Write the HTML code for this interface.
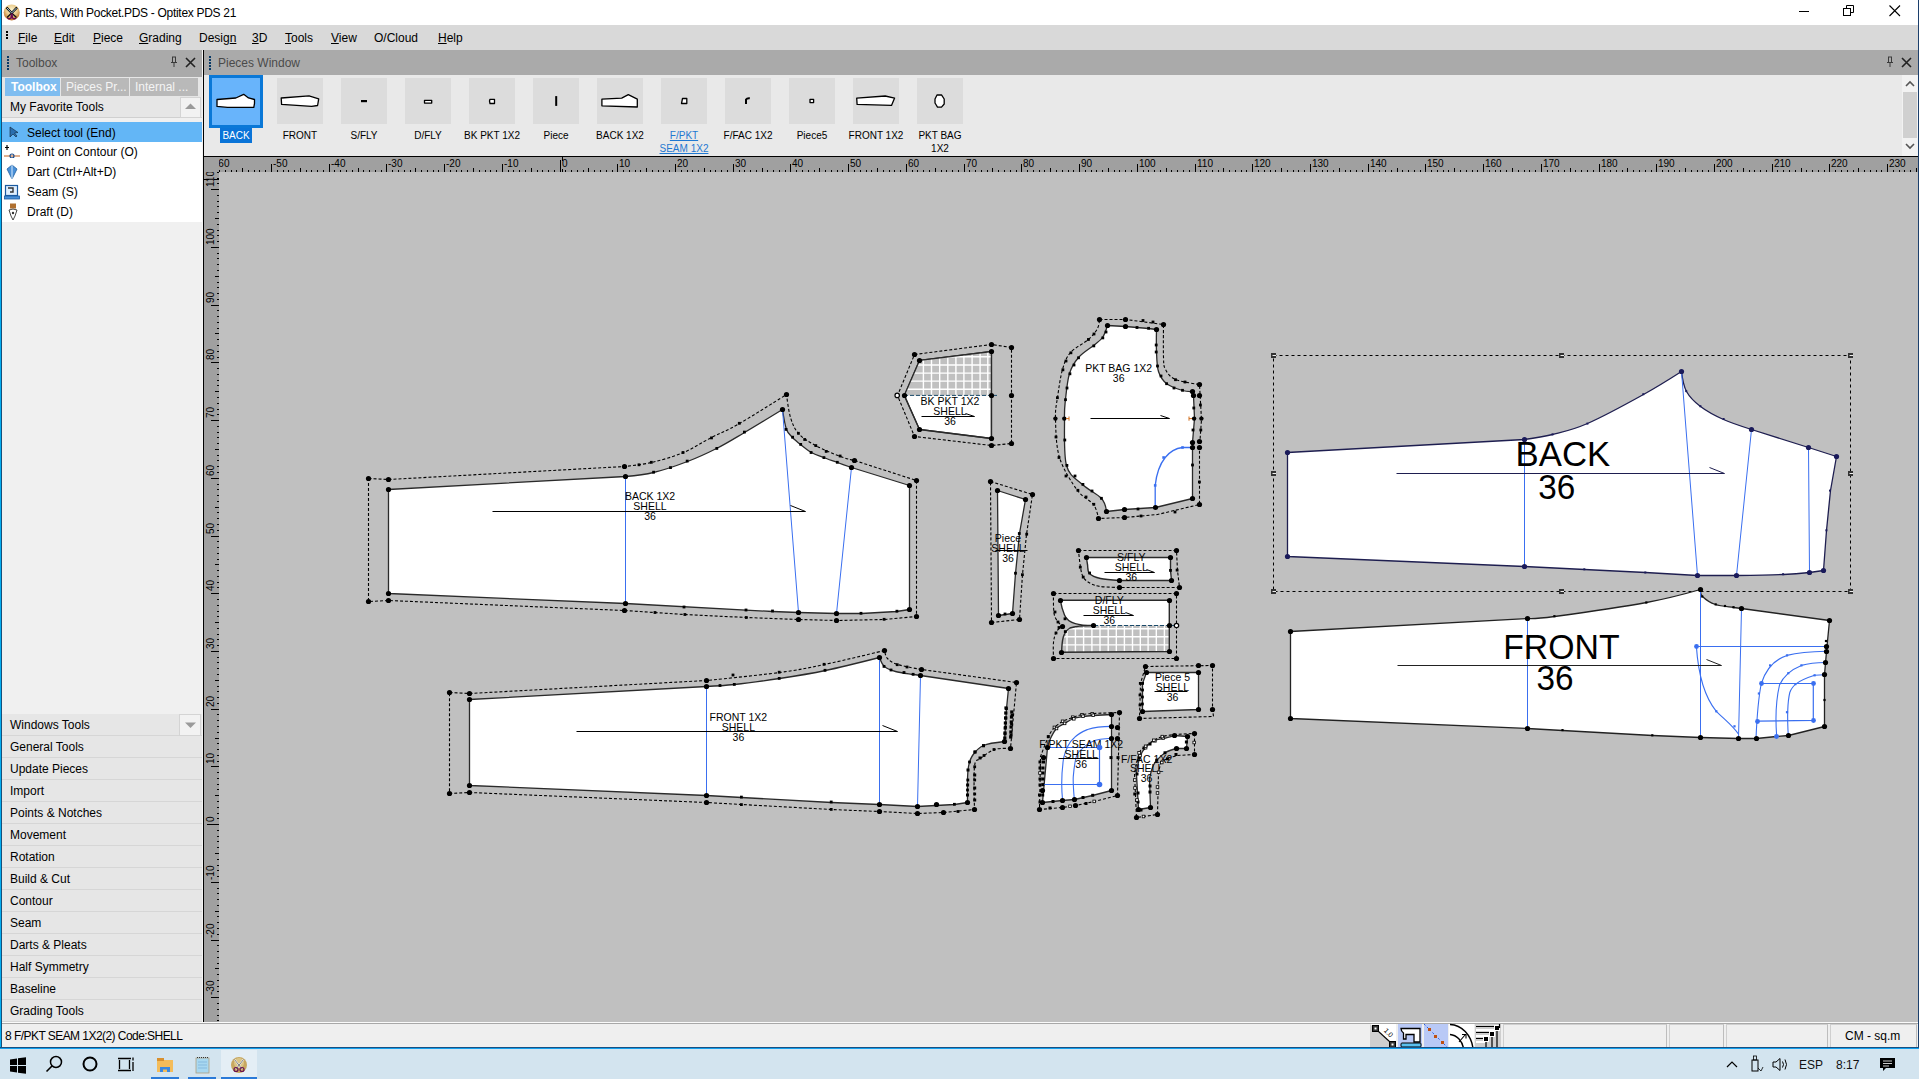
<!DOCTYPE html><html><head><meta charset="utf-8"><title>Optitex PDS</title><style>
*{box-sizing:border-box;margin:0;padding:0}
html,body{width:1919px;height:1079px;overflow:hidden;background:#c0c0c0;font-family:"Liberation Sans",sans-serif;font-size:12px;color:#000}
.a{position:absolute}
.t{position:absolute;white-space:nowrap;line-height:1}
u{text-decoration:underline;text-underline-offset:1px}
</style></head><body>
<div class="a" style="left:0;top:0;width:1919px;height:25px;background:#fff"></div>
<div class="t" style="left:25px;top:7px;font-size:12px;color:#000;letter-spacing:-0.3px">Pants, With Pocket.PDS - Optitex PDS 21</div>
<svg class="a" style="left:3px;top:4px" width="18" height="18" viewBox="0 0 18 18"><defs><radialGradient id="gic" cx="0.5" cy="0.35" r="0.6"><stop offset="0" stop-color="#fbf4d0"/><stop offset="0.6" stop-color="#e8c888"/><stop offset="1" stop-color="#c07830"/></radialGradient></defs><circle cx="8.7" cy="8.4" r="8" fill="url(#gic)"/><path d="M3.5 3.5 L8.7 9 L14 3.5" fill="none" stroke="#000" stroke-width="2.2"/><path d="M4 4 L8.7 9 L13.5 4" fill="none" stroke="#bfe8ff" stroke-width="0.9"/><path d="M8.7 9 L4 13.5 M8.7 9 L13.5 13.5" stroke="#111" stroke-width="1.3"/><path d="M8.5 9.5 L8 14 Q6 15.5 4.5 14 M9 9.5 L9.5 14 Q11.5 15.5 13 14" fill="none" stroke="#6a0a50" stroke-width="1.4"/></svg>
<div class="a" style="left:1799px;top:11px;width:10px;height:1px;background:#000"></div>
<svg class="a" style="left:1843px;top:5px" width="12" height="12" viewBox="0 0 12 12"><rect x="0.5" y="3.5" width="7" height="7" fill="none" stroke="#000"/><path d="M3.5 3.5 V0.5 H10.5 V7.5 H7.5" fill="none" stroke="#000"/></svg>
<svg class="a" style="left:1889px;top:5px" width="12" height="12" viewBox="0 0 12 12"><path d="M0.5 0.5 L11 11 M11 0.5 L0.5 11" stroke="#000" stroke-width="1.1"/></svg>
<div class="a" style="left:0;top:25px;width:1919px;height:25px;background:#d9d9d9"></div>
<div class="a" style="left:6px;top:31px;width:2px;height:2px;background:#000;box-shadow:0 3px 0 #000,0 6px 0 #000"></div>
<div class="t" style="left:18px;top:32px"><u>F</u>ile</div>
<div class="t" style="left:54px;top:32px"><u>E</u>dit</div>
<div class="t" style="left:93px;top:32px"><u>P</u>iece</div>
<div class="t" style="left:139px;top:32px"><u>G</u>rading</div>
<div class="t" style="left:199px;top:32px">Desig<u>n</u></div>
<div class="t" style="left:252px;top:32px"><u>3</u>D</div>
<div class="t" style="left:285px;top:32px"><u>T</u>ools</div>
<div class="t" style="left:331px;top:32px"><u>V</u>iew</div>
<div class="t" style="left:374px;top:32px">O/Cloud</div>
<div class="t" style="left:438px;top:32px"><u>H</u>elp</div>
<div class="a" style="left:0;top:0;width:1px;height:1049px;background:#05aef2"></div>
<div class="a" style="left:1px;top:0;width:1px;height:1049px;background:#16507a"></div>
<div class="a" style="left:1918px;top:0;width:1px;height:1049px;background:#1c3f6c"></div>
<div class="a" style="left:2px;top:50px;width:201px;height:972px;background:#f0f0f0"></div>
<div class="a" style="left:2px;top:50px;width:201px;height:28px;background:#aaaaaa"></div>
<div class="a" style="left:7px;top:56px;width:2px;height:2px;background:#0a3a66;box-shadow:0 3px 0 #0a3a66,0 6px 0 #0a3a66,0 9px 0 #0a3a66,0 12px 0 #0a3a66"></div>
<div class="t" style="left:16px;top:57px;color:#4a4a4a">Toolbox</div>
<svg class="a" style="left:169px;top:56px" width="10" height="12" viewBox="0 0 10 12"><path d="M3 1 H7 M3.5 1 V6 M6.5 1 V6 M2 6.5 H8 M5 7 V11" stroke="#3a3a3a" stroke-width="1"/></svg>
<svg class="a" style="left:185px;top:57px" width="11" height="11" viewBox="0 0 11 11"><path d="M1 1 L10 10 M10 1 L1 10" stroke="#222" stroke-width="1.6"/></svg>
<div class="a" style="left:2px;top:77px;width:201px;height:19px;background:#e6e6e6"></div>
<div class="a" style="left:5px;top:78px;width:55px;height:18px;background:#7fbdf0"></div>
<div class="t" style="left:11px;top:81px;color:#fff;font-weight:bold">Toolbox</div>
<div class="a" style="left:61px;top:78px;width:68px;height:18px;background:#b9b9b9"></div>
<div class="t" style="left:66px;top:81px;color:#f4f4f4">Pieces Pr...</div>
<div class="a" style="left:130px;top:78px;width:68px;height:18px;background:#b9b9b9"></div>
<div class="t" style="left:135px;top:81px;color:#f4f4f4">Internal ...</div>
<div class="a" style="left:2px;top:96px;width:200px;height:22px;background:#e6e6e6;border-bottom:1px solid #d0d0d0"></div>
<div class="t" style="left:10px;top:101px">My Favorite Tools</div>
<div class="a" style="left:180px;top:97px;width:21px;height:21px;background:#f2f2f2;border:1px solid #d4d4d4"></div>
<svg class="a" style="left:185px;top:103px" width="11" height="7"><path d="M0 6 L5.5 0.5 L11 6 Z" fill="#9a9a9a"/></svg>
<div class="a" style="left:2px;top:122px;width:200px;height:100px;background:#fff"></div>
<div class="a" style="left:2px;top:122px;width:200px;height:20px;background:#63b6f6"></div>
<div class="t" style="left:27px;top:127px">Select tool (End)</div>
<div class="t" style="left:27px;top:146px">Point on Contour (O)</div>
<div class="t" style="left:27px;top:166px">Dart (Ctrl+Alt+D)</div>
<div class="t" style="left:27px;top:186px">Seam (S)</div>
<div class="t" style="left:27px;top:206px">Draft (D)</div>
<svg class="a" style="left:8px;top:126px" width="12" height="12" viewBox="0 0 12 12"><path d="M2 1 V11 L5 8 L8 11 L9 10 L6.5 7 L10 6.5 Z" fill="#2a6fb0" stroke="#123" stroke-width="0.6"/></svg>
<svg class="a" style="left:4px;top:144px" width="18" height="14" viewBox="0 0 18 14"><path d="M3 1 V6 M1 3.5 H5" stroke="#000" stroke-width="1.2"/><path d="M0 12 H16" stroke="#c06020" stroke-width="1"/><circle cx="8" cy="12" r="2" fill="none" stroke="#1a4a8a" stroke-width="1.2"/></svg>
<svg class="a" style="left:6px;top:164px" width="12" height="16" viewBox="0 0 12 16"><path d="M6 1 L11 5 L6 15 L1 5 Z" fill="#4a90d8" stroke="#2060a0" stroke-width="0.8"/><path d="M6 1 V15" stroke="#d8ecff" stroke-width="1"/></svg>
<svg class="a" style="left:4px;top:184px" width="16" height="16" viewBox="0 0 16 16"><rect x="1.5" y="1.5" width="12" height="10" fill="#dfefff" stroke="#1a5aa0" stroke-width="1.2"/><rect x="0.5" y="12" width="15" height="3" fill="#4a90d8" stroke="#1a5aa0" stroke-width="0.8"/><path d="M4 4 H9 V8 H6" fill="none" stroke="#333" stroke-width="1.4"/></svg>
<svg class="a" style="left:7px;top:203px" width="12" height="18" viewBox="0 0 12 18"><rect x="3" y="0.5" width="6" height="5" fill="#b07030"/><path d="M2 7 L6 6 L10 7 L8 13 L6 17 L4 13 Z" fill="#fff" stroke="#333" stroke-width="0.9"/><circle cx="6" cy="10" r="1.2" fill="#333"/></svg>
<div class="a" style="left:2px;top:714px;width:200px;height:308px;background:#e6e6e6"></div>
<div class="a" style="left:2px;top:735px;width:200px;height:1px;background:#d6d6d6"></div>
<div class="t" style="left:10px;top:719px">Windows Tools</div>
<div class="a" style="left:2px;top:757px;width:200px;height:1px;background:#d6d6d6"></div>
<div class="t" style="left:10px;top:741px">General Tools</div>
<div class="a" style="left:2px;top:779px;width:200px;height:1px;background:#d6d6d6"></div>
<div class="t" style="left:10px;top:763px">Update Pieces</div>
<div class="a" style="left:2px;top:801px;width:200px;height:1px;background:#d6d6d6"></div>
<div class="t" style="left:10px;top:785px">Import</div>
<div class="a" style="left:2px;top:823px;width:200px;height:1px;background:#d6d6d6"></div>
<div class="t" style="left:10px;top:807px">Points &amp; Notches</div>
<div class="a" style="left:2px;top:845px;width:200px;height:1px;background:#d6d6d6"></div>
<div class="t" style="left:10px;top:829px">Movement</div>
<div class="a" style="left:2px;top:867px;width:200px;height:1px;background:#d6d6d6"></div>
<div class="t" style="left:10px;top:851px">Rotation</div>
<div class="a" style="left:2px;top:889px;width:200px;height:1px;background:#d6d6d6"></div>
<div class="t" style="left:10px;top:873px">Build &amp; Cut</div>
<div class="a" style="left:2px;top:911px;width:200px;height:1px;background:#d6d6d6"></div>
<div class="t" style="left:10px;top:895px">Contour</div>
<div class="a" style="left:2px;top:933px;width:200px;height:1px;background:#d6d6d6"></div>
<div class="t" style="left:10px;top:917px">Seam</div>
<div class="a" style="left:2px;top:955px;width:200px;height:1px;background:#d6d6d6"></div>
<div class="t" style="left:10px;top:939px">Darts &amp; Pleats</div>
<div class="a" style="left:2px;top:977px;width:200px;height:1px;background:#d6d6d6"></div>
<div class="t" style="left:10px;top:961px">Half Symmetry</div>
<div class="a" style="left:2px;top:999px;width:200px;height:1px;background:#d6d6d6"></div>
<div class="t" style="left:10px;top:983px">Baseline</div>
<div class="a" style="left:2px;top:1021px;width:200px;height:1px;background:#d6d6d6"></div>
<div class="t" style="left:10px;top:1005px">Grading Tools</div>
<div class="a" style="left:179px;top:714px;width:22px;height:22px;background:#f2f2f2;border:1px solid #d4d4d4"></div>
<svg class="a" style="left:185px;top:722px" width="11" height="7"><path d="M0 0.5 L5.5 6 L11 0.5 Z" fill="#9a9a9a"/></svg>
<div class="a" style="left:202px;top:50px;width:1px;height:972px;background:#f4f4f4"></div>
<div class="a" style="left:203px;top:50px;width:1px;height:972px;background:#000"></div>
<div class="a" style="left:204px;top:50px;width:1714px;height:25px;background:#aaaaaa"></div>
<div class="a" style="left:209px;top:56px;width:2px;height:2px;background:#0a3a66;box-shadow:0 3px 0 #0a3a66,0 6px 0 #0a3a66,0 9px 0 #0a3a66,0 12px 0 #0a3a66"></div>
<div class="t" style="left:218px;top:57px;color:#4a4a4a">Pieces Window</div>
<svg class="a" style="left:1885px;top:56px" width="10" height="12" viewBox="0 0 10 12"><path d="M3 1 H7 M3.5 1 V6 M6.5 1 V6 M2 6.5 H8 M5 7 V11" stroke="#3a3a3a" stroke-width="1"/></svg>
<svg class="a" style="left:1901px;top:57px" width="11" height="11" viewBox="0 0 11 11"><path d="M1 1 L10 10 M10 1 L1 10" stroke="#222" stroke-width="1.6"/></svg>
<div class="a" style="left:204px;top:75px;width:1714px;height:81px;background:#e9e9e9"></div>
<div class="a" style="left:1902px;top:75px;width:16px;height:81px;background:#f2f2f2"></div>
<div class="a" style="left:1903px;top:92px;width:14px;height:46px;background:#d0d0d0"></div>
<svg class="a" style="left:1905px;top:80px" width="10" height="7"><path d="M1 6 L5 2 L9 6" fill="none" stroke="#555" stroke-width="1.6"/></svg>
<svg class="a" style="left:1905px;top:143px" width="10" height="7"><path d="M1 1 L5 5 L9 1" fill="none" stroke="#555" stroke-width="1.6"/></svg>
<div class="a" style="left:204px;top:156px;width:1714px;height:1px;background:#000"></div>
<div class="a" style="left:209px;top:75px;width:54px;height:53px;background:#68b4fb;border:3px solid #0a78d7"></div>
<div class="a" style="left:220px;top:128px;width:32px;height:15px;background:#0a74d8"></div>
<div class="t" style="left:196px;width:80px;text-align:center;top:131px;font-size:10px;color:#fff">BACK</div>
<div class="a" style="left:277px;top:78px;width:46px;height:46px;background:#dcdcdc"></div>
<div class="t" style="left:255px;width:90px;text-align:center;top:131px;font-size:10px;color:#000;">FRONT</div>
<div class="a" style="left:341px;top:78px;width:46px;height:46px;background:#dcdcdc"></div>
<div class="t" style="left:319px;width:90px;text-align:center;top:131px;font-size:10px;color:#000;">S/FLY</div>
<div class="a" style="left:405px;top:78px;width:46px;height:46px;background:#dcdcdc"></div>
<div class="t" style="left:383px;width:90px;text-align:center;top:131px;font-size:10px;color:#000;">D/FLY</div>
<div class="a" style="left:469px;top:78px;width:46px;height:46px;background:#dcdcdc"></div>
<div class="t" style="left:447px;width:90px;text-align:center;top:131px;font-size:10px;color:#000;">BK PKT 1X2</div>
<div class="a" style="left:533px;top:78px;width:46px;height:46px;background:#dcdcdc"></div>
<div class="t" style="left:511px;width:90px;text-align:center;top:131px;font-size:10px;color:#000;">Piece</div>
<div class="a" style="left:597px;top:78px;width:46px;height:46px;background:#dcdcdc"></div>
<div class="t" style="left:575px;width:90px;text-align:center;top:131px;font-size:10px;color:#000;">BACK 1X2</div>
<div class="a" style="left:661px;top:78px;width:46px;height:46px;background:#dcdcdc"></div>
<div class="t" style="left:639px;width:90px;text-align:center;top:131px;font-size:10px;color:#1f78d1;text-decoration:underline;">F/PKT</div>
<div class="t" style="left:639px;width:90px;text-align:center;top:144px;font-size:10px;color:#1f78d1;text-decoration:underline;">SEAM 1X2</div>
<div class="a" style="left:725px;top:78px;width:46px;height:46px;background:#dcdcdc"></div>
<div class="t" style="left:703px;width:90px;text-align:center;top:131px;font-size:10px;color:#000;">F/FAC 1X2</div>
<div class="a" style="left:789px;top:78px;width:46px;height:46px;background:#dcdcdc"></div>
<div class="t" style="left:767px;width:90px;text-align:center;top:131px;font-size:10px;color:#000;">Piece5</div>
<div class="a" style="left:853px;top:78px;width:46px;height:46px;background:#dcdcdc"></div>
<div class="t" style="left:831px;width:90px;text-align:center;top:131px;font-size:10px;color:#000;">FRONT 1X2</div>
<div class="a" style="left:917px;top:78px;width:46px;height:46px;background:#dcdcdc"></div>
<div class="t" style="left:895px;width:90px;text-align:center;top:131px;font-size:10px;color:#000;">PKT BAG</div>
<div class="t" style="left:895px;width:90px;text-align:center;top:144px;font-size:10px;color:#000;">1X2</div>
<svg class="a" style="left:0;top:0" width="1000" height="150" viewBox="0 0 1000 150">
<path d="M217 99.5 L235.8 98 L243.7 94.3 L248.5 97.9 L254.5 99.5 L254.5 103.3 L253.8 107.4 L227.5 107.4 L217 106.4 Z" fill="#fff" stroke="#000" stroke-width="1.3" stroke-linejoin="round"/>
<path d="M281.2 98 L309 95.8 L318.7 98.8 L317.6 105.5 L311.6 106.3 L281.6 104.4 Z" fill="#fff" stroke="#000" stroke-width="1.3" stroke-linejoin="round"/>
<rect x="361" y="100" width="6" height="2.2" fill="#000"/>
<rect x="424.5" y="100.3" width="7.2" height="2.8" fill="#fff" stroke="#000" stroke-width="1.3" stroke-linejoin="round"/>
<path d="M490 99.3 L494.5 99.3 L494.5 103.5 L490 103.5 L489.5 101 Z" fill="#fff" stroke="#000" stroke-width="1.3" stroke-linejoin="round"/>
<rect x="555.2" y="96.1" width="2" height="9.8" fill="#000"/>
<path d="M601.9 99.2 L621.7 98.1 L628.3 94.6 L637.3 99.2 L637.3 107 L601.9 105.8 Z" fill="#fff" stroke="#000" stroke-width="1.3" stroke-linejoin="round"/>
<path d="M681.5 103.5 L682.5 98.5 L686.8 98.5 L686.8 103.5 Z" fill="#fff" stroke="#000" stroke-width="1.3" stroke-linejoin="round"/>
<path d="M746 104 V99.5 Q747 98 749.8 98.3" fill="none" stroke="#000" stroke-width="2"/>
<rect x="810" y="99.3" width="3.6" height="3.3" fill="#fff" stroke="#000" stroke-width="1.3" stroke-linejoin="round"/>
<path d="M856.7 98.1 L885.2 96 L894.6 98.1 L891.5 105.4 L857.1 104.4 Z" fill="#fff" stroke="#000" stroke-width="1.3" stroke-linejoin="round"/>
<path d="M937 95 L941.5 94.8 L944.2 99 L944.2 104 L941.5 107.2 L937.5 107.2 L935 103 L935 99 Z" fill="#fff" stroke="#000" stroke-width="1.3" stroke-linejoin="round"/>
</svg>
<svg class="a" style="left:0;top:0" width="1919" height="1079" viewBox="0 0 1919 1079">
<rect x="204" y="157" width="1714" height="15" fill="#a0a0a0"/>
<rect x="204" y="172" width="15" height="850" fill="#a0a0a0"/>
<rect x="219" y="172" width="1699" height="850" fill="#c0c0c0"/>
<g clip-path="url(#ctop)">
<clipPath id="ctop"><rect x="219" y="157" width="1699" height="15"/></clipPath>
<path d="M219.5 170V172M225.5 170V172M231.5 170V172M236.5 170V172M242.5 168V172M248.5 170V172M254.5 170V172M259.5 170V172M265.5 170V172M271.5 164V172M277.5 170V172M283.5 170V172M288.5 170V172M294.5 170V172M300.5 168V172M306.5 170V172M311.5 170V172M317.5 170V172M323.5 170V172M329.5 164V172M334.5 170V172M340.5 170V172M346.5 170V172M352.5 170V172M358.5 168V172M363.5 170V172M369.5 170V172M375.5 170V172M381.5 170V172M386.5 164V172M392.5 170V172M398.5 170V172M404.5 170V172M410.5 170V172M415.5 168V172M421.5 170V172M427.5 170V172M433.5 170V172M438.5 170V172M444.5 164V172M450.5 170V172M456.5 170V172M461.5 170V172M467.5 170V172M473.5 168V172M479.5 170V172M485.5 170V172M490.5 170V172M496.5 170V172M502.5 164V172M508.5 170V172M513.5 170V172M519.5 170V172M525.5 170V172M531.5 168V172M537.5 170V172M542.5 170V172M548.5 170V172M554.5 170V172M560.5 160V172M565.5 170V172M571.5 170V172M577.5 170V172M583.5 170V172M588.5 168V172M594.5 170V172M600.5 170V172M606.5 170V172M612.5 170V172M617.5 164V172M623.5 170V172M629.5 170V172M635.5 170V172M640.5 170V172M646.5 168V172M652.5 170V172M658.5 170V172M663.5 170V172M669.5 170V172M675.5 164V172M681.5 170V172M687.5 170V172M692.5 170V172M698.5 170V172M704.5 168V172M710.5 170V172M715.5 170V172M721.5 170V172M727.5 170V172M733.5 164V172M739.5 170V172M744.5 170V172M750.5 170V172M756.5 170V172M762.5 168V172M767.5 170V172M773.5 170V172M779.5 170V172M785.5 170V172M790.5 164V172M796.5 170V172M802.5 170V172M808.5 170V172M814.5 170V172M819.5 168V172M825.5 170V172M831.5 170V172M837.5 170V172M842.5 170V172M848.5 164V172M854.5 170V172M860.5 170V172M866.5 170V172M871.5 170V172M877.5 168V172M883.5 170V172M889.5 170V172M894.5 170V172M900.5 170V172M906.5 164V172M912.5 170V172M917.5 170V172M923.5 170V172M929.5 170V172M935.5 168V172M941.5 170V172M946.5 170V172M952.5 170V172M958.5 170V172M964.5 164V172M969.5 170V172M975.5 170V172M981.5 170V172M987.5 170V172M992.5 168V172M998.5 170V172M1004.5 170V172M1010.5 170V172M1016.5 170V172M1021.5 164V172M1027.5 170V172M1033.5 170V172M1039.5 170V172M1044.5 170V172M1050.5 168V172M1056.5 170V172M1062.5 170V172M1068.5 170V172M1073.5 170V172M1079.5 164V172M1085.5 170V172M1091.5 170V172M1096.5 170V172M1102.5 170V172M1108.5 168V172M1114.5 170V172M1119.5 170V172M1125.5 170V172M1131.5 170V172M1137.5 164V172M1143.5 170V172M1148.5 170V172M1154.5 170V172M1160.5 170V172M1166.5 168V172M1171.5 170V172M1177.5 170V172M1183.5 170V172M1189.5 170V172M1195.5 164V172M1200.5 170V172M1206.5 170V172M1212.5 170V172M1218.5 170V172M1223.5 168V172M1229.5 170V172M1235.5 170V172M1241.5 170V172M1246.5 170V172M1252.5 164V172M1258.5 170V172M1264.5 170V172M1270.5 170V172M1275.5 170V172M1281.5 168V172M1287.5 170V172M1293.5 170V172M1298.5 170V172M1304.5 170V172M1310.5 164V172M1316.5 170V172M1322.5 170V172M1327.5 170V172M1333.5 170V172M1339.5 168V172M1345.5 170V172M1350.5 170V172M1356.5 170V172M1362.5 170V172M1368.5 164V172M1373.5 170V172M1379.5 170V172M1385.5 170V172M1391.5 170V172M1397.5 168V172M1402.5 170V172M1408.5 170V172M1414.5 170V172M1420.5 170V172M1425.5 164V172M1431.5 170V172M1437.5 170V172M1443.5 170V172M1448.5 170V172M1454.5 168V172M1460.5 170V172M1466.5 170V172M1472.5 170V172M1477.5 170V172M1483.5 164V172M1489.5 170V172M1495.5 170V172M1500.5 170V172M1506.5 170V172M1512.5 168V172M1518.5 170V172M1524.5 170V172M1529.5 170V172M1535.5 170V172M1541.5 164V172M1547.5 170V172M1552.5 170V172M1558.5 170V172M1564.5 170V172M1570.5 168V172M1575.5 170V172M1581.5 170V172M1587.5 170V172M1593.5 170V172M1599.5 164V172M1604.5 170V172M1610.5 170V172M1616.5 170V172M1622.5 170V172M1627.5 168V172M1633.5 170V172M1639.5 170V172M1645.5 170V172M1651.5 170V172M1656.5 164V172M1662.5 170V172M1668.5 170V172M1674.5 170V172M1679.5 170V172M1685.5 168V172M1691.5 170V172M1697.5 170V172M1702.5 170V172M1708.5 170V172M1714.5 164V172M1720.5 170V172M1726.5 170V172M1731.5 170V172M1737.5 170V172M1743.5 168V172M1749.5 170V172M1754.5 170V172M1760.5 170V172M1766.5 170V172M1772.5 164V172M1777.5 170V172M1783.5 170V172M1789.5 170V172M1795.5 170V172M1801.5 168V172M1806.5 170V172M1812.5 170V172M1818.5 170V172M1824.5 170V172M1829.5 164V172M1835.5 170V172M1841.5 170V172M1847.5 170V172M1853.5 170V172M1858.5 168V172M1864.5 170V172M1870.5 170V172M1876.5 170V172M1881.5 170V172M1887.5 164V172M1893.5 170V172M1899.5 170V172M1904.5 170V172M1910.5 170V172M1916.5 168V172" stroke="#000" stroke-width="1"/>
<text x="215.0" y="166.8" font-size="10" font-family="Liberation Sans" fill="#000">-60</text>
<text x="273.0" y="166.8" font-size="10" font-family="Liberation Sans" fill="#000">-50</text>
<text x="331.0" y="166.8" font-size="10" font-family="Liberation Sans" fill="#000">-40</text>
<text x="388.0" y="166.8" font-size="10" font-family="Liberation Sans" fill="#000">-30</text>
<text x="446.0" y="166.8" font-size="10" font-family="Liberation Sans" fill="#000">-20</text>
<text x="504.0" y="166.8" font-size="10" font-family="Liberation Sans" fill="#000">-10</text>
<text x="562.0" y="166.8" font-size="10" font-family="Liberation Sans" fill="#000">0</text>
<text x="619.0" y="166.8" font-size="10" font-family="Liberation Sans" fill="#000">10</text>
<text x="677.0" y="166.8" font-size="10" font-family="Liberation Sans" fill="#000">20</text>
<text x="735.0" y="166.8" font-size="10" font-family="Liberation Sans" fill="#000">30</text>
<text x="792.0" y="166.8" font-size="10" font-family="Liberation Sans" fill="#000">40</text>
<text x="850.0" y="166.8" font-size="10" font-family="Liberation Sans" fill="#000">50</text>
<text x="908.0" y="166.8" font-size="10" font-family="Liberation Sans" fill="#000">60</text>
<text x="966.0" y="166.8" font-size="10" font-family="Liberation Sans" fill="#000">70</text>
<text x="1023.0" y="166.8" font-size="10" font-family="Liberation Sans" fill="#000">80</text>
<text x="1081.0" y="166.8" font-size="10" font-family="Liberation Sans" fill="#000">90</text>
<text x="1139.0" y="166.8" font-size="10" font-family="Liberation Sans" fill="#000">100</text>
<text x="1197.0" y="166.8" font-size="10" font-family="Liberation Sans" fill="#000">110</text>
<text x="1254.0" y="166.8" font-size="10" font-family="Liberation Sans" fill="#000">120</text>
<text x="1312.0" y="166.8" font-size="10" font-family="Liberation Sans" fill="#000">130</text>
<text x="1370.0" y="166.8" font-size="10" font-family="Liberation Sans" fill="#000">140</text>
<text x="1427.0" y="166.8" font-size="10" font-family="Liberation Sans" fill="#000">150</text>
<text x="1485.0" y="166.8" font-size="10" font-family="Liberation Sans" fill="#000">160</text>
<text x="1543.0" y="166.8" font-size="10" font-family="Liberation Sans" fill="#000">170</text>
<text x="1601.0" y="166.8" font-size="10" font-family="Liberation Sans" fill="#000">180</text>
<text x="1658.0" y="166.8" font-size="10" font-family="Liberation Sans" fill="#000">190</text>
<text x="1716.0" y="166.8" font-size="10" font-family="Liberation Sans" fill="#000">200</text>
<text x="1774.0" y="166.8" font-size="10" font-family="Liberation Sans" fill="#000">210</text>
<text x="1831.0" y="166.8" font-size="10" font-family="Liberation Sans" fill="#000">220</text>
<text x="1889.0" y="166.8" font-size="10" font-family="Liberation Sans" fill="#000">230</text>
</g>
<clipPath id="cleft"><rect x="204" y="172" width="15" height="850"/></clipPath>
<g clip-path="url(#cleft)">
<text transform="translate(213.5 1053.0) rotate(-90)" font-size="10" font-family="Liberation Sans" fill="#000">-40</text>
<text transform="translate(213.5 995.0) rotate(-90)" font-size="10" font-family="Liberation Sans" fill="#000">-30</text>
<text transform="translate(213.5 938.0) rotate(-90)" font-size="10" font-family="Liberation Sans" fill="#000">-20</text>
<text transform="translate(213.5 880.0) rotate(-90)" font-size="10" font-family="Liberation Sans" fill="#000">-10</text>
<text transform="translate(213.5 822.0) rotate(-90)" font-size="10" font-family="Liberation Sans" fill="#000">0</text>
<text transform="translate(213.5 764.0) rotate(-90)" font-size="10" font-family="Liberation Sans" fill="#000">10</text>
<text transform="translate(213.5 707.0) rotate(-90)" font-size="10" font-family="Liberation Sans" fill="#000">20</text>
<text transform="translate(213.5 649.0) rotate(-90)" font-size="10" font-family="Liberation Sans" fill="#000">30</text>
<text transform="translate(213.5 591.0) rotate(-90)" font-size="10" font-family="Liberation Sans" fill="#000">40</text>
<text transform="translate(213.5 534.0) rotate(-90)" font-size="10" font-family="Liberation Sans" fill="#000">50</text>
<text transform="translate(213.5 476.0) rotate(-90)" font-size="10" font-family="Liberation Sans" fill="#000">60</text>
<text transform="translate(213.5 418.0) rotate(-90)" font-size="10" font-family="Liberation Sans" fill="#000">70</text>
<text transform="translate(213.5 360.0) rotate(-90)" font-size="10" font-family="Liberation Sans" fill="#000">80</text>
<text transform="translate(213.5 303.0) rotate(-90)" font-size="10" font-family="Liberation Sans" fill="#000">90</text>
<text transform="translate(213.5 245.0) rotate(-90)" font-size="10" font-family="Liberation Sans" fill="#000">100</text>
<text transform="translate(213.5 187.0) rotate(-90)" font-size="10" font-family="Liberation Sans" fill="#000">110</text>
<path d="M211 1055.5H219M217 1049.5H219M217 1043.5H219M217 1038.5H219M217 1032.5H219M215 1026.5H219M217 1020.5H219M217 1015.5H219M217 1009.5H219M217 1003.5H219M211 997.5H219M217 991.5H219M217 986.5H219M217 980.5H219M217 974.5H219M215 968.5H219M217 963.5H219M217 957.5H219M217 951.5H219M217 945.5H219M211 940.5H219M217 934.5H219M217 928.5H219M217 922.5H219M217 916.5H219M215 911.5H219M217 905.5H219M217 899.5H219M217 893.5H219M217 888.5H219M211 882.5H219M217 876.5H219M217 870.5H219M217 865.5H219M217 859.5H219M215 853.5H219M217 847.5H219M217 841.5H219M217 836.5H219M217 830.5H219M207 824.5H219M217 818.5H219M217 813.5H219M217 807.5H219M217 801.5H219M215 795.5H219M217 789.5H219M217 784.5H219M217 778.5H219M217 772.5H219M211 766.5H219M217 761.5H219M217 755.5H219M217 749.5H219M217 743.5H219M215 738.5H219M217 732.5H219M217 726.5H219M217 720.5H219M217 714.5H219M211 709.5H219M217 703.5H219M217 697.5H219M217 691.5H219M217 686.5H219M215 680.5H219M217 674.5H219M217 668.5H219M217 662.5H219M217 657.5H219M211 651.5H219M217 645.5H219M217 639.5H219M217 634.5H219M217 628.5H219M215 622.5H219M217 616.5H219M217 611.5H219M217 605.5H219M217 599.5H219M211 593.5H219M217 587.5H219M217 582.5H219M217 576.5H219M217 570.5H219M215 564.5H219M217 559.5H219M217 553.5H219M217 547.5H219M217 541.5H219M211 536.5H219M217 530.5H219M217 524.5H219M217 518.5H219M217 512.5H219M215 507.5H219M217 501.5H219M217 495.5H219M217 489.5H219M217 484.5H219M211 478.5H219M217 472.5H219M217 466.5H219M217 460.5H219M217 455.5H219M215 449.5H219M217 443.5H219M217 437.5H219M217 432.5H219M217 426.5H219M211 420.5H219M217 414.5H219M217 409.5H219M217 403.5H219M217 397.5H219M215 391.5H219M217 385.5H219M217 380.5H219M217 374.5H219M217 368.5H219M211 362.5H219M217 357.5H219M217 351.5H219M217 345.5H219M217 339.5H219M215 333.5H219M217 328.5H219M217 322.5H219M217 316.5H219M217 310.5H219M211 305.5H219M217 299.5H219M217 293.5H219M217 287.5H219M217 282.5H219M215 276.5H219M217 270.5H219M217 264.5H219M217 258.5H219M217 253.5H219M211 247.5H219M217 241.5H219M217 235.5H219M217 230.5H219M217 224.5H219M215 218.5H219M217 212.5H219M217 206.5H219M217 201.5H219M217 195.5H219M211 189.5H219M217 183.5H219M217 178.5H219M217 172.5H219M217 166.5H219" stroke="#000" stroke-width="1"/>
</g>
<path d="M562.5 157V161M562.5 169V172" stroke="#000" stroke-width="1"/>
<path d="M204 179.5H209M214 179.5H219" stroke="#000" stroke-width="1"/>
<path d="M368.5 478.5L388.5 479.5L624.5 466.5C624.5 466.5 641.7 464.8 651.5 462.5C661.3 460.2 673.5 456.7 683.5 452.5C693.5 448.3 702.2 442.3 711.5 437.5C720.8 432.7 727.0 430.7 739.5 423.5C752.0 416.3 786.5 394.5 786.5 394.5C786.5 394.5 788.5 411.0 790.5 417.5C792.5 424.0 794.3 428.8 798.5 433.5C802.7 438.2 808.5 441.7 815.5 445.5C822.5 449.3 834.0 454.0 840.5 456.5C847.0 459.0 854.5 460.5 854.5 460.5L916.5 480.5L916.5 616.5L884.5 619.5L836.5 620.5L798.5 619.5L746.5 617.5L684.5 614.5L624.5 610.5L388.5 600.5L368.5 601.5L368.5 478.5Z" fill="none" stroke="#000" stroke-width="1.1" stroke-dasharray="3 2"/>
<path d="M388.5 489.5L625.5 476.5C625.5 476.5 643.2 475.0 653.5 472.5C663.8 470.0 677.0 465.5 687.5 461.5C698.0 457.5 707.0 453.3 716.5 448.5C726.0 443.7 733.5 439.0 744.5 432.5C755.5 426.0 782.5 409.5 782.5 409.5C782.5 409.5 784.8 424.8 786.5 429.5C788.2 434.2 790.2 435.0 792.5 437.5C794.8 440.0 797.3 442.0 800.5 444.5C803.7 447.0 807.7 450.3 811.5 452.5C815.3 454.7 819.2 455.8 823.5 457.5C827.8 459.2 832.8 460.8 837.5 462.5C842.2 464.2 851.5 467.5 851.5 467.5L909.5 485.5L909.5 609.5L896.5 611.5L861.5 613.5L836.5 613.5L798.5 612.5L772.5 611.5L625.5 603.5L388.5 593.5L388.5 489.5Z" fill="#fff" stroke="#2a2a2a" stroke-width="1.3" stroke-linejoin="round"/>
<path d="M625.5 476.5L625.5 603.5" stroke="#3a6ff0" stroke-width="1" fill="none"/>
<path d="M782.5 409.5L798.5 612.5" stroke="#3a6ff0" stroke-width="1" fill="none"/>
<path d="M851.5 467.5L836.5 613.5" stroke="#3a6ff0" stroke-width="1" fill="none"/>
<path d="M492.5 511.5L805.5 511.5" stroke="#000" stroke-width="1" fill="none"/>
<path d="M790.5 505.5L805.5 511.5" stroke="#000" stroke-width="1" fill="none"/>
<text x="650.0" y="500.0" font-size="10.5" font-family="Liberation Sans" fill="#000" text-anchor="middle">BACK 1X2</text>
<text x="650.0" y="510.0" font-size="10.5" font-family="Liberation Sans" fill="#000" text-anchor="middle">SHELL</text>
<text x="650.0" y="520.0" font-size="10.5" font-family="Liberation Sans" fill="#000" text-anchor="middle">36</text>
<circle cx="368.5" cy="478.5" r="2.6" fill="#000"/>
<circle cx="388.5" cy="479.5" r="2.6" fill="#000"/>
<circle cx="624.5" cy="466.5" r="2.6" fill="#000"/>
<circle cx="786.5" cy="394.5" r="2.6" fill="#000"/>
<circle cx="854.5" cy="460.5" r="2.6" fill="#000"/>
<circle cx="916.5" cy="480.5" r="2.6" fill="#000"/>
<circle cx="916.5" cy="616.5" r="2.6" fill="#000"/>
<circle cx="836.5" cy="620.5" r="2.6" fill="#000"/>
<circle cx="798.5" cy="619.5" r="2.6" fill="#000"/>
<circle cx="624.5" cy="610.5" r="2.6" fill="#000"/>
<circle cx="388.5" cy="600.5" r="2.6" fill="#000"/>
<circle cx="368.5" cy="601.5" r="2.6" fill="#000"/>
<circle cx="388.5" cy="489.5" r="2.6" fill="#000"/>
<circle cx="625.5" cy="476.5" r="2.6" fill="#000"/>
<circle cx="782.5" cy="409.5" r="2.6" fill="#000"/>
<circle cx="851.5" cy="467.5" r="2.6" fill="#000"/>
<circle cx="909.5" cy="485.5" r="2.6" fill="#000"/>
<circle cx="909.5" cy="609.5" r="2.6" fill="#000"/>
<circle cx="836.5" cy="613.5" r="2.6" fill="#000"/>
<circle cx="798.5" cy="612.5" r="2.6" fill="#000"/>
<circle cx="625.5" cy="603.5" r="2.6" fill="#000"/>
<circle cx="388.5" cy="593.5" r="2.6" fill="#000"/>
<rect x="652.2" y="470.8" width="2.8" height="2.8" fill="#000"/>
<rect x="669.1" y="466.2" width="2.8" height="2.8" fill="#000"/>
<rect x="685.8" y="459.7" width="2.8" height="2.8" fill="#000"/>
<rect x="715.4" y="447.0" width="2.8" height="2.8" fill="#000"/>
<rect x="743.0" y="430.7" width="2.8" height="2.8" fill="#000"/>
<rect x="784.7" y="428.0" width="2.8" height="2.8" fill="#000"/>
<rect x="791.2" y="435.8" width="2.8" height="2.8" fill="#000"/>
<rect x="799.3" y="443.0" width="2.8" height="2.8" fill="#000"/>
<rect x="809.7" y="451.1" width="2.8" height="2.8" fill="#000"/>
<rect x="822.5" y="456.2" width="2.8" height="2.8" fill="#000"/>
<rect x="835.9" y="460.9" width="2.8" height="2.8" fill="#000"/>
<rect x="895.5" y="609.8" width="2.8" height="2.8" fill="#000"/>
<rect x="859.6" y="611.9" width="2.8" height="2.8" fill="#000"/>
<rect x="771.1" y="609.6" width="2.8" height="2.8" fill="#000"/>
<rect x="744.6" y="608.6" width="2.8" height="2.8" fill="#000"/>
<rect x="682.6" y="605.6" width="2.8" height="2.8" fill="#000"/>
<rect x="637.6" y="463.4" width="2.8" height="2.8" fill="#000"/>
<rect x="649.9" y="460.9" width="2.8" height="2.8" fill="#000"/>
<rect x="681.6" y="451.1" width="2.8" height="2.8" fill="#000"/>
<rect x="710.1" y="436.5" width="2.8" height="2.8" fill="#000"/>
<rect x="737.9" y="421.9" width="2.8" height="2.8" fill="#000"/>
<rect x="797.0" y="431.9" width="2.8" height="2.8" fill="#000"/>
<rect x="803.3" y="438.1" width="2.8" height="2.8" fill="#000"/>
<rect x="814.4" y="444.2" width="2.8" height="2.8" fill="#000"/>
<rect x="824.8" y="450.0" width="2.8" height="2.8" fill="#000"/>
<rect x="838.7" y="454.6" width="2.8" height="2.8" fill="#000"/>
<rect x="882.7" y="617.9" width="2.8" height="2.8" fill="#000"/>
<rect x="744.9" y="616.1" width="2.8" height="2.8" fill="#000"/>
<rect x="683.5" y="613.1" width="2.8" height="2.8" fill="#000"/>
<rect x="653.6" y="611.1" width="2.8" height="2.8" fill="#000"/>
<path d="M449.5 692.5L469.5 693.5L706.5 680.5C706.5 680.5 759.8 675.2 779.5 672.5C799.2 669.8 807.0 668.2 824.5 664.5C842.0 660.8 884.5 650.5 884.5 650.5C884.5 650.5 885.3 656.2 887.5 658.5C889.7 660.8 891.8 662.7 897.5 664.5C903.2 666.3 921.5 669.5 921.5 669.5L1016.5 682.5L1010.5 748.5C1010.5 748.5 999.5 747.8 994.5 749.5C989.5 751.2 983.8 755.7 980.5 758.5C977.2 761.3 975.5 758.0 974.5 766.5C973.5 775.0 974.5 809.5 974.5 809.5L943.5 812.5L917.5 813.5L879.5 811.5L831.5 809.5L741.5 804.5L706.5 802.5L469.5 792.5L449.5 793.5L449.5 692.5Z" fill="none" stroke="#000" stroke-width="1.1" stroke-dasharray="3 2"/>
<path d="M469.5 699.5L706.5 686.5C706.5 686.5 722.3 685.8 734.5 684.5C746.7 683.2 764.3 680.8 779.5 678.5C794.7 676.2 808.8 674.0 825.5 670.5C842.2 667.0 879.5 657.5 879.5 657.5C879.5 657.5 881.8 664.2 884.5 666.5C887.2 668.8 890.7 670.2 895.5 671.5C900.3 672.8 909.3 673.8 913.5 674.5C917.7 675.2 920.5 675.5 920.5 675.5L1008.5 688.5L1006.5 708.5L1004.5 741.5C1004.5 741.5 988.8 743.2 983.5 745.5C978.2 747.8 975.0 752.0 972.5 755.5C970.0 759.0 969.3 762.3 968.5 766.5C967.7 770.7 967.5 780.5 967.5 780.5L967.5 802.5L954.5 804.5L917.5 806.5L879.5 804.5L831.5 802.5L741.5 797.5L706.5 795.5L469.5 785.5L469.5 699.5Z" fill="#fff" stroke="#2a2a2a" stroke-width="1.3" stroke-linejoin="round"/>
<path d="M706.5 686.5L706.5 795.5" stroke="#3a6ff0" stroke-width="1" fill="none"/>
<path d="M879.5 657.5L879.5 804.5" stroke="#3a6ff0" stroke-width="1" fill="none"/>
<path d="M920.5 675.5L917.5 806.5" stroke="#3a6ff0" stroke-width="1" fill="none"/>
<path d="M576.5 731.5L897.5 731.5" stroke="#000" stroke-width="1" fill="none"/>
<path d="M882.5 725.5L897.5 731.5" stroke="#000" stroke-width="1" fill="none"/>
<text x="738.4" y="720.5" font-size="10.5" font-family="Liberation Sans" fill="#000" text-anchor="middle">FRONT 1X2</text>
<text x="738.4" y="730.5" font-size="10.5" font-family="Liberation Sans" fill="#000" text-anchor="middle">SHELL</text>
<text x="738.4" y="740.5" font-size="10.5" font-family="Liberation Sans" fill="#000" text-anchor="middle">36</text>
<circle cx="449.5" cy="692.5" r="2.6" fill="#000"/>
<circle cx="469.5" cy="693.5" r="2.6" fill="#000"/>
<circle cx="706.5" cy="680.5" r="2.6" fill="#000"/>
<circle cx="884.5" cy="650.5" r="2.6" fill="#000"/>
<circle cx="921.5" cy="669.5" r="2.6" fill="#000"/>
<circle cx="1016.5" cy="682.5" r="2.6" fill="#000"/>
<circle cx="1010.5" cy="748.5" r="2.6" fill="#000"/>
<circle cx="974.5" cy="809.5" r="2.6" fill="#000"/>
<circle cx="917.5" cy="813.5" r="2.6" fill="#000"/>
<circle cx="879.5" cy="811.5" r="2.6" fill="#000"/>
<circle cx="706.5" cy="802.5" r="2.6" fill="#000"/>
<circle cx="469.5" cy="792.5" r="2.6" fill="#000"/>
<circle cx="449.5" cy="793.5" r="2.6" fill="#000"/>
<circle cx="943.5" cy="812.5" r="2.6" fill="#000"/>
<circle cx="469.5" cy="699.5" r="2.6" fill="#000"/>
<circle cx="706.5" cy="686.5" r="2.6" fill="#000"/>
<circle cx="879.5" cy="657.5" r="2.6" fill="#000"/>
<circle cx="920.5" cy="675.5" r="2.6" fill="#000"/>
<circle cx="1008.5" cy="688.5" r="2.6" fill="#000"/>
<circle cx="1004.5" cy="741.5" r="2.6" fill="#000"/>
<circle cx="967.5" cy="802.5" r="2.6" fill="#000"/>
<circle cx="917.5" cy="806.5" r="2.6" fill="#000"/>
<circle cx="879.5" cy="804.5" r="2.6" fill="#000"/>
<circle cx="706.5" cy="795.5" r="2.6" fill="#000"/>
<circle cx="469.5" cy="785.5" r="2.6" fill="#000"/>
<circle cx="936.5" cy="804.5" r="2.6" fill="#000"/>
<rect x="732.9" y="683.0" width="2.8" height="2.8" fill="#000"/>
<rect x="777.8" y="677.0" width="2.8" height="2.8" fill="#000"/>
<rect x="823.6" y="668.9" width="2.8" height="2.8" fill="#000"/>
<rect x="882.6" y="665.0" width="2.8" height="2.8" fill="#000"/>
<rect x="889.6" y="668.6" width="2.8" height="2.8" fill="#000"/>
<rect x="902.6" y="671.1" width="2.8" height="2.8" fill="#000"/>
<rect x="911.7" y="672.9" width="2.8" height="2.8" fill="#000"/>
<rect x="740.0" y="795.7" width="2.8" height="2.8" fill="#000"/>
<rect x="829.8" y="800.6" width="2.8" height="2.8" fill="#000"/>
<rect x="953.0" y="802.9" width="2.8" height="2.8" fill="#000"/>
<rect x="1005.0" y="707.3" width="2.8" height="2.8" fill="#000"/>
<rect x="1004.4" y="716.6" width="2.8" height="2.8" fill="#000"/>
<rect x="1004.1" y="725.6" width="2.8" height="2.8" fill="#000"/>
<rect x="1003.6" y="732.6" width="2.8" height="2.8" fill="#000"/>
<rect x="982.1" y="744.3" width="2.8" height="2.8" fill="#000"/>
<rect x="973.6" y="750.6" width="2.8" height="2.8" fill="#000"/>
<rect x="968.1" y="760.6" width="2.8" height="2.8" fill="#000"/>
<rect x="966.4" y="778.6" width="2.8" height="2.8" fill="#000"/>
<rect x="966.1" y="788.6" width="2.8" height="2.8" fill="#000"/>
<rect x="718.6" y="684.1" width="2.8" height="2.8" fill="#000"/>
<rect x="777.8" y="670.8" width="2.8" height="2.8" fill="#000"/>
<rect x="822.7" y="662.9" width="2.8" height="2.8" fill="#000"/>
<rect x="895.8" y="663.3" width="2.8" height="2.8" fill="#000"/>
<rect x="905.6" y="665.6" width="2.8" height="2.8" fill="#000"/>
<rect x="1010.6" y="713.6" width="2.8" height="2.8" fill="#000"/>
<rect x="1010.1" y="722.6" width="2.8" height="2.8" fill="#000"/>
<rect x="1009.6" y="733.6" width="2.8" height="2.8" fill="#000"/>
<rect x="992.6" y="748.1" width="2.8" height="2.8" fill="#000"/>
<rect x="982.6" y="754.1" width="2.8" height="2.8" fill="#000"/>
<rect x="973.3" y="765.4" width="2.8" height="2.8" fill="#000"/>
<rect x="973.3" y="778.6" width="2.8" height="2.8" fill="#000"/>
<rect x="973.3" y="792.6" width="2.8" height="2.8" fill="#000"/>
<rect x="829.8" y="808.0" width="2.8" height="2.8" fill="#000"/>
<rect x="740.0" y="803.2" width="2.8" height="2.8" fill="#000"/>
<rect x="956.6" y="810.1" width="2.8" height="2.8" fill="#000"/>
<rect x="731.6" y="673.6" width="2.8" height="2.8" fill="#000"/>
<rect x="1004.4" y="706.4" width="3.2" height="3.2" fill="#000"/>
<rect x="1004.2" y="711.4" width="3.2" height="3.2" fill="#000"/>
<rect x="1004.0" y="716.4" width="3.2" height="3.2" fill="#000"/>
<rect x="1003.8" y="721.4" width="3.2" height="3.2" fill="#000"/>
<rect x="1003.6" y="726.4" width="3.2" height="3.2" fill="#000"/>
<rect x="1003.4" y="731.4" width="3.2" height="3.2" fill="#000"/>
<rect x="1003.2" y="736.4" width="3.2" height="3.2" fill="#000"/>
<rect x="1010.2" y="710.4" width="3.2" height="3.2" fill="#000"/>
<rect x="1009.9" y="715.4" width="3.2" height="3.2" fill="#000"/>
<rect x="1009.7" y="720.4" width="3.2" height="3.2" fill="#000"/>
<rect x="1009.5" y="725.4" width="3.2" height="3.2" fill="#000"/>
<rect x="1009.3" y="730.4" width="3.2" height="3.2" fill="#000"/>
<rect x="1009.1" y="735.4" width="3.2" height="3.2" fill="#000"/>
<rect x="982.0" y="744.2" width="3" height="3" fill="#000"/>
<rect x="973.5" y="750.5" width="3" height="3" fill="#000"/>
<rect x="966.5" y="768.5" width="3" height="3" fill="#000"/>
<rect x="966.1" y="783.5" width="3" height="3" fill="#000"/>
<rect x="966.0" y="793.5" width="3" height="3" fill="#000"/>
<rect x="978.5" y="756.5" width="3" height="3" fill="#000"/>
<rect x="973.2" y="773.5" width="3" height="3" fill="#000"/>
<rect x="973.2" y="786.5" width="3" height="3" fill="#000"/>
<rect x="973.2" y="798.5" width="3" height="3" fill="#000"/>
<path d="M914.5 354.5L991.5 344.5L1011.5 347.5L1011.5 443.5L991.5 445.5L914.5 436.5L897.5 395.5L914.5 354.5Z" fill="none" stroke="#000" stroke-width="1.1" stroke-dasharray="3 2"/>
<path d="M919.5 360.5L991.5 351.5L991.5 438.5L919.5 429.5L904.5 395.5L919.5 360.5Z" fill="#fff" stroke="#2a2a2a" stroke-width="1.3" stroke-linejoin="round"/>
<clipPath id="bkclip"><path d="M919.5 360.4L991.4 351.5L991.4 395.4L904.2 395.4Z"/></clipPath>
<g clip-path="url(#bkclip)"><rect x="900" y="345" width="95" height="51" fill="#c0c0c0"/><path d="M923.4 345V396" stroke="#fff" stroke-width="1.4"/><path d="M931.5 345V396" stroke="#fff" stroke-width="1.4"/><path d="M939.7 345V396" stroke="#fff" stroke-width="1.4"/><path d="M947.8 345V396" stroke="#fff" stroke-width="1.4"/><path d="M955.9 345V396" stroke="#fff" stroke-width="1.4"/><path d="M963.9 345V396" stroke="#fff" stroke-width="1.4"/><path d="M972.1 345V396" stroke="#fff" stroke-width="1.4"/><path d="M980.1 345V396" stroke="#fff" stroke-width="1.4"/><path d="M987.8 345V396" stroke="#fff" stroke-width="1.4"/><path d="M900 356.7H995" stroke="#fff" stroke-width="1.4"/><path d="M900 365H995" stroke="#fff" stroke-width="1.4"/><path d="M900 373.1H995" stroke="#fff" stroke-width="1.4"/><path d="M900 381.1H995" stroke="#fff" stroke-width="1.4"/><path d="M900 389.3H995" stroke="#fff" stroke-width="1.4"/></g>
<path d="M919.5 360.4L991.4 351.5L991.4 438.4L919.5 429.5L904.2 395.4Z" fill="none" stroke="#2a2a2a" stroke-width="1.3"/>
<path d="M904 395.4H997" stroke="#1a4a6a" stroke-width="1" stroke-dasharray="4 2"/>
<text x="950.0" y="405.0" font-size="10.5" font-family="Liberation Sans" fill="#000" text-anchor="middle">BK PKT 1X2</text>
<text x="950.0" y="414.8" font-size="10.5" font-family="Liberation Sans" fill="#000" text-anchor="middle">SHELL</text>
<text x="950.0" y="424.6" font-size="10.5" font-family="Liberation Sans" fill="#000" text-anchor="middle">36</text>
<path d="M921.5 416.5L974.5 416.5" stroke="#000" stroke-width="1" fill="none"/>
<path d="M965.5 413.5L974.5 416.5" stroke="#000" stroke-width="1" fill="none"/>
<circle cx="914.5" cy="354.5" r="2.6" fill="#000"/>
<circle cx="991.5" cy="344.5" r="2.6" fill="#000"/>
<circle cx="1011.5" cy="347.5" r="2.6" fill="#000"/>
<circle cx="1011.5" cy="395.5" r="2.6" fill="#000"/>
<circle cx="1011.5" cy="443.5" r="2.6" fill="#000"/>
<circle cx="991.5" cy="445.5" r="2.6" fill="#000"/>
<circle cx="914.5" cy="436.5" r="2.6" fill="#000"/>
<circle cx="919.5" cy="360.5" r="2.6" fill="#000"/>
<circle cx="991.5" cy="351.5" r="2.6" fill="#000"/>
<circle cx="991.5" cy="438.5" r="2.6" fill="#000"/>
<circle cx="919.5" cy="429.5" r="2.6" fill="#000"/>
<circle cx="904.5" cy="395.5" r="2.6" fill="#000"/>
<circle cx="991.5" cy="395.5" r="2.6" fill="#000"/>
<circle cx="897.2" cy="395.4" r="2.2" fill="#fff" stroke="#000" stroke-width="1.2"/>
<path d="M990.5 481.5L1032.5 494.5L1026.5 534.5L1022.5 574.5L1019.5 619.5L991.5 622.5L990.5 481.5Z" fill="none" stroke="#000" stroke-width="1.1" stroke-dasharray="3 2"/>
<path d="M997.5 490.5L1025.5 499.5L1019.5 533.5L1015.5 573.5L1012.5 613.5L998.5 615.5L997.5 490.5Z" fill="#fff" stroke="#2a2a2a" stroke-width="1.3" stroke-linejoin="round"/>
<text x="1008.0" y="542.0" font-size="10.5" font-family="Liberation Sans" fill="#000" text-anchor="middle">Piece</text>
<text x="1008.0" y="551.8" font-size="10.5" font-family="Liberation Sans" fill="#000" text-anchor="middle">SHELL</text>
<text x="1008.0" y="561.6" font-size="10.5" font-family="Liberation Sans" fill="#000" text-anchor="middle">36</text>
<path d="M995.5 550.5L1027.5 550.5" stroke="#000" stroke-width="1" fill="none"/>
<circle cx="990.5" cy="481.5" r="2.6" fill="#000"/>
<circle cx="1032.5" cy="494.5" r="2.6" fill="#000"/>
<circle cx="1019.5" cy="619.5" r="2.6" fill="#000"/>
<circle cx="991.5" cy="622.5" r="2.6" fill="#000"/>
<circle cx="997.5" cy="490.5" r="2.6" fill="#000"/>
<circle cx="1025.5" cy="499.5" r="2.6" fill="#000"/>
<circle cx="1012.5" cy="613.5" r="2.6" fill="#000"/>
<circle cx="998.5" cy="615.5" r="2.6" fill="#000"/>
<rect x="1017.9" y="532.1" width="2.8" height="2.8" fill="#000"/>
<rect x="1014.1" y="571.8" width="2.8" height="2.8" fill="#000"/>
<rect x="1025.3" y="532.8" width="2.8" height="2.8" fill="#000"/>
<rect x="1021.0" y="573.3" width="2.8" height="2.8" fill="#000"/>
<rect x="1003.6" y="612.6" width="2.8" height="2.8" fill="#000"/>
<path d="M1099.5 319.5L1125.5 319.5L1163.5 324.5C1163.5 324.5 1163.2 350.0 1163.5 357.5C1163.8 365.0 1163.5 365.8 1165.5 369.5C1167.5 373.2 1169.8 377.0 1175.5 379.5C1181.2 382.0 1199.5 384.5 1199.5 384.5L1201.5 419.5L1199.5 447.5L1199.5 504.5L1157.5 514.5L1124.5 517.5L1098.5 518.5C1098.5 518.5 1097.0 509.2 1093.5 504.5C1090.0 499.8 1083.2 498.3 1077.5 490.5C1071.8 482.7 1063.2 469.5 1059.5 457.5C1055.8 445.5 1055.8 428.5 1055.5 418.5C1055.2 408.5 1056.3 405.7 1057.5 397.5C1058.7 389.3 1060.3 377.0 1062.5 369.5C1064.7 362.0 1066.2 357.5 1070.5 352.5C1074.8 347.5 1084.0 343.5 1088.5 339.5C1093.0 335.5 1095.7 331.8 1097.5 328.5C1099.3 325.2 1099.5 319.5 1099.5 319.5Z" fill="none" stroke="#000" stroke-width="1.1" stroke-dasharray="3 2"/>
<path d="M1107.5 325.5L1125.5 326.5L1148.5 328.5L1156.5 329.5C1156.5 329.5 1156.2 344.5 1156.5 351.5C1156.8 358.5 1156.8 366.2 1158.5 371.5C1160.2 376.8 1162.5 380.3 1166.5 383.5C1170.5 386.7 1178.2 389.2 1182.5 390.5C1186.8 391.8 1192.5 391.5 1192.5 391.5L1193.5 395.5L1194.5 418.5L1192.5 442.5L1192.5 498.5L1155.5 507.5L1124.5 509.5L1106.5 511.5C1106.5 511.5 1105.5 503.0 1101.5 498.5C1097.5 494.0 1088.3 490.0 1082.5 484.5C1076.7 479.0 1069.5 476.5 1066.5 465.5C1063.5 454.5 1064.7 429.5 1064.5 418.5C1064.3 407.5 1064.7 407.0 1065.5 399.5C1066.3 392.0 1067.3 380.5 1069.5 373.5C1071.7 366.5 1074.5 362.2 1078.5 357.5C1082.5 352.8 1089.5 348.8 1093.5 345.5C1097.5 342.2 1100.2 340.8 1102.5 337.5C1104.8 334.2 1107.5 325.5 1107.5 325.5Z" fill="#fff" stroke="#2a2a2a" stroke-width="1.3" stroke-linejoin="round"/>
<path d="M1192.5 447.5H1182.5C1170 449 1158 460 1155.2 485.4V507.3" fill="none" stroke="#3a6ff0" stroke-width="1.3"/>
<path d="M1090.5 418.5L1169.5 418.5" stroke="#000" stroke-width="1" fill="none"/>
<path d="M1160.5 415.5L1169.5 418.5" stroke="#000" stroke-width="1" fill="none"/>
<text x="1118.7" y="372.0" font-size="10.5" font-family="Liberation Sans" fill="#000" text-anchor="middle">PKT BAG 1X2</text>
<text x="1118.7" y="382.0" font-size="10.5" font-family="Liberation Sans" fill="#000" text-anchor="middle">36</text>
<circle cx="1099.5" cy="319.5" r="2.6" fill="#000"/>
<circle cx="1125.5" cy="319.5" r="2.6" fill="#000"/>
<circle cx="1163.5" cy="324.5" r="2.6" fill="#000"/>
<circle cx="1199.5" cy="384.5" r="2.6" fill="#000"/>
<circle cx="1199.5" cy="395.5" r="2.6" fill="#000"/>
<circle cx="1199.5" cy="441.5" r="2.6" fill="#000"/>
<circle cx="1199.5" cy="447.5" r="2.6" fill="#000"/>
<circle cx="1199.5" cy="504.5" r="2.6" fill="#000"/>
<circle cx="1098.5" cy="518.5" r="2.6" fill="#000"/>
<circle cx="1124.5" cy="517.5" r="2.6" fill="#000"/>
<circle cx="1107.5" cy="325.5" r="2.6" fill="#000"/>
<circle cx="1125.5" cy="326.5" r="2.6" fill="#000"/>
<circle cx="1156.5" cy="329.5" r="2.6" fill="#000"/>
<circle cx="1192.5" cy="391.5" r="2.6" fill="#000"/>
<circle cx="1193.5" cy="395.5" r="2.6" fill="#000"/>
<circle cx="1192.5" cy="442.5" r="2.6" fill="#000"/>
<circle cx="1192.5" cy="447.5" r="2.6" fill="#000"/>
<circle cx="1192.5" cy="498.5" r="2.6" fill="#000"/>
<circle cx="1106.5" cy="511.5" r="2.6" fill="#000"/>
<circle cx="1124.5" cy="509.5" r="2.6" fill="#000"/>
<circle cx="1155.5" cy="507.5" r="2.6" fill="#000"/>
<rect x="1162.3" y="456.2" width="2.6" height="2.6" fill="#3a6ff0"/>
<rect x="1181.2" y="446.2" width="2.6" height="2.6" fill="#3a6ff0"/>
<rect x="1153.9" y="484.1" width="2.6" height="2.6" fill="#3a6ff0"/>
<rect x="1147.2" y="326.9" width="2.8" height="2.8" fill="#000"/>
<rect x="1135.6" y="326.1" width="2.8" height="2.8" fill="#000"/>
<rect x="1154.8" y="343.6" width="2.8" height="2.8" fill="#000"/>
<rect x="1154.8" y="350.6" width="2.8" height="2.8" fill="#000"/>
<rect x="1156.1" y="364.6" width="2.8" height="2.8" fill="#000"/>
<rect x="1159.6" y="374.6" width="2.8" height="2.8" fill="#000"/>
<rect x="1165.2" y="382.3" width="2.8" height="2.8" fill="#000"/>
<rect x="1172.6" y="386.6" width="2.8" height="2.8" fill="#000"/>
<rect x="1181.1" y="388.9" width="2.8" height="2.8" fill="#000"/>
<rect x="1192.4" y="406.6" width="2.8" height="2.8" fill="#000"/>
<rect x="1191.6" y="428.6" width="2.8" height="2.8" fill="#000"/>
<rect x="1191.1" y="463.6" width="2.8" height="2.8" fill="#000"/>
<rect x="1136.6" y="507.6" width="2.8" height="2.8" fill="#000"/>
<rect x="1100.0" y="496.9" width="2.8" height="2.8" fill="#000"/>
<rect x="1090.6" y="489.6" width="2.8" height="2.8" fill="#000"/>
<rect x="1081.5" y="483.0" width="2.8" height="2.8" fill="#000"/>
<rect x="1073.6" y="474.6" width="2.8" height="2.8" fill="#000"/>
<rect x="1065.5" y="464.0" width="2.8" height="2.8" fill="#000"/>
<rect x="1063.4" y="438.6" width="2.8" height="2.8" fill="#000"/>
<rect x="1064.1" y="398.3" width="2.8" height="2.8" fill="#000"/>
<rect x="1065.6" y="386.6" width="2.8" height="2.8" fill="#000"/>
<rect x="1068.5" y="372.4" width="2.8" height="2.8" fill="#000"/>
<rect x="1072.6" y="363.6" width="2.8" height="2.8" fill="#000"/>
<rect x="1077.1" y="356.4" width="2.8" height="2.8" fill="#000"/>
<rect x="1092.4" y="344.5" width="2.8" height="2.8" fill="#000"/>
<rect x="1101.4" y="336.5" width="2.8" height="2.8" fill="#000"/>
<rect x="1104.6" y="330.6" width="2.8" height="2.8" fill="#000"/>
<rect x="1141.6" y="319.1" width="2.8" height="2.8" fill="#000"/>
<rect x="1151.6" y="320.6" width="2.8" height="2.8" fill="#000"/>
<rect x="1174.1" y="378.3" width="2.8" height="2.8" fill="#000"/>
<rect x="1183.6" y="380.6" width="2.8" height="2.8" fill="#000"/>
<rect x="1199.0" y="403.6" width="2.8" height="2.8" fill="#000"/>
<rect x="1199.4" y="428.6" width="2.8" height="2.8" fill="#000"/>
<rect x="1198.0" y="480.6" width="2.8" height="2.8" fill="#000"/>
<rect x="1173.6" y="510.6" width="2.8" height="2.8" fill="#000"/>
<rect x="1139.6" y="514.6" width="2.8" height="2.8" fill="#000"/>
<rect x="1092.4" y="502.9" width="2.8" height="2.8" fill="#000"/>
<rect x="1084.6" y="495.6" width="2.8" height="2.8" fill="#000"/>
<rect x="1076.5" y="488.9" width="2.8" height="2.8" fill="#000"/>
<rect x="1064.6" y="474.6" width="2.8" height="2.8" fill="#000"/>
<rect x="1057.6" y="456.1" width="2.8" height="2.8" fill="#000"/>
<rect x="1054.6" y="435.6" width="2.8" height="2.8" fill="#000"/>
<rect x="1056.0" y="396.3" width="2.8" height="2.8" fill="#000"/>
<rect x="1061.5" y="368.4" width="2.8" height="2.8" fill="#000"/>
<rect x="1064.6" y="359.6" width="2.8" height="2.8" fill="#000"/>
<rect x="1069.5" y="351.4" width="2.8" height="2.8" fill="#000"/>
<rect x="1087.0" y="338.1" width="2.8" height="2.8" fill="#000"/>
<rect x="1092.6" y="332.6" width="2.8" height="2.8" fill="#000"/>
<circle cx="1055.4" cy="418.6" r="2.2" fill="#000"/><circle cx="1064.3" cy="418.6" r="2.2" fill="#000"/><circle cx="1194.1" cy="418.6" r="2.2" fill="#000"/><circle cx="1201.4" cy="418.6" r="2.2" fill="#000"/>
<path d="M1066 418.6H1069M1069 416.5V420.7M1189 418.6H1192M1189 416.5V420.7" stroke="#d07020" stroke-width="1"/>
<path d="M1078.5 550.5L1176.5 550.5L1177.5 570.5L1179.5 587.5L1119.5 587.5C1119.5 587.5 1105.3 587.2 1100.5 586.5C1095.7 585.8 1093.3 585.0 1090.5 583.5C1087.7 582.0 1085.2 580.2 1083.5 577.5C1081.8 574.8 1081.3 572.0 1080.5 567.5C1079.7 563.0 1078.5 550.5 1078.5 550.5Z" fill="none" stroke="#000" stroke-width="1.1" stroke-dasharray="3 2"/>
<path d="M1086.5 557.5L1170.5 557.5L1170.5 570.5L1171.5 580.5L1119.5 580.5C1119.5 580.5 1105.5 579.7 1100.5 578.5C1095.5 577.3 1091.7 575.8 1089.5 573.5C1087.3 571.2 1088.0 567.2 1087.5 564.5C1087.0 561.8 1086.5 557.5 1086.5 557.5Z" fill="#fff" stroke="#2a2a2a" stroke-width="1.4" stroke-linejoin="round"/>
<text x="1131.3" y="561.0" font-size="10.5" font-family="Liberation Sans" fill="#000" text-anchor="middle">S/FLY</text>
<text x="1131.3" y="570.9" font-size="10.5" font-family="Liberation Sans" fill="#000" text-anchor="middle">SHELL</text>
<text x="1131.3" y="580.8" font-size="10.5" font-family="Liberation Sans" fill="#000" text-anchor="middle">36</text>
<path d="M1104.5 572.5L1154.5 572.5" stroke="#000" stroke-width="1" fill="none"/>
<path d="M1146.5 569.5L1154.5 572.5" stroke="#000" stroke-width="1" fill="none"/>
<circle cx="1078.5" cy="550.5" r="2.6" fill="#000"/>
<circle cx="1176.5" cy="550.5" r="2.6" fill="#000"/>
<circle cx="1179.5" cy="587.5" r="2.6" fill="#000"/>
<circle cx="1086.5" cy="557.5" r="2.6" fill="#000"/>
<circle cx="1170.5" cy="557.5" r="2.6" fill="#000"/>
<circle cx="1171.5" cy="580.5" r="2.6" fill="#000"/>
<circle cx="1119.5" cy="580.5" r="2.6" fill="#000"/>
<circle cx="1119.5" cy="587.5" r="2.6" fill="#000"/>
<rect x="1169.1" y="569.0" width="2.8" height="2.8" fill="#000"/>
<rect x="1175.7" y="568.7" width="2.8" height="2.8" fill="#000"/>
<rect x="1088.2" y="571.6" width="2.8" height="2.8" fill="#000"/>
<rect x="1078.9" y="565.8" width="2.8" height="2.8" fill="#000"/>
<rect x="1081.8" y="575.7" width="2.8" height="2.8" fill="#000"/>
<path d="M1053.5 593.5L1176.5 593.5L1176.5 658.5L1053.5 658.5C1053.5 658.5 1053.0 647.0 1053.5 642.5C1054.0 638.0 1055.0 634.2 1056.5 631.5C1058.0 628.8 1062.5 626.5 1062.5 626.5C1062.5 626.5 1056.0 621.0 1054.5 615.5C1053.0 610.0 1053.5 593.5 1053.5 593.5Z" fill="none" stroke="#000" stroke-width="1.1" stroke-dasharray="3 2"/>
<clipPath id="dfclip"><path d="M1093.4 625.5H1169.3V651.5L1061.6 652.2C1062 640 1063 632 1070 628C1077 625.5 1085 625.5 1093.4 625.5Z"/></clipPath>
<path d="M1060.4 600.3H1169.3V625.5H1093.4C1080 625.5 1068 624 1064.5 615C1062 609 1061 604 1060.4 600.3Z" fill="#fff"/>
<g clip-path="url(#dfclip)"><rect x="1055" y="624" width="120" height="30" fill="#c0c0c0"/><path d="M1067 624V653" stroke="#fff" stroke-width="1.4"/><path d="M1075.4 624V653" stroke="#fff" stroke-width="1.4"/><path d="M1083.6 624V653" stroke="#fff" stroke-width="1.4"/><path d="M1091.9 624V653" stroke="#fff" stroke-width="1.4"/><path d="M1100 624V653" stroke="#fff" stroke-width="1.4"/><path d="M1108.2 624V653" stroke="#fff" stroke-width="1.4"/><path d="M1116.3 624V653" stroke="#fff" stroke-width="1.4"/><path d="M1124.4 624V653" stroke="#fff" stroke-width="1.4"/><path d="M1132.5 624V653" stroke="#fff" stroke-width="1.4"/><path d="M1140.3 624V653" stroke="#fff" stroke-width="1.4"/><path d="M1148.1 624V653" stroke="#fff" stroke-width="1.4"/><path d="M1156.3 624V653" stroke="#fff" stroke-width="1.4"/><path d="M1164.4 624V653" stroke="#fff" stroke-width="1.4"/><path d="M1055 628.7H1175" stroke="#fff" stroke-width="1.4"/><path d="M1055 636.8H1175" stroke="#fff" stroke-width="1.4"/><path d="M1055 644.9H1175" stroke="#fff" stroke-width="1.4"/></g>
<path d="M1060.4 600.3H1169.3V651.5L1061.6 652.2C1062 640 1063 632 1070 628C1077 625.5 1085 625.5 1093.4 625.5C1080 625.5 1068 624 1064.5 615C1062 609 1061 604 1060.4 600.3Z" fill="none" stroke="#2a2a2a" stroke-width="1.4"/>
<path d="M1094 625.5H1176" stroke="#1a4a6a" stroke-width="1" stroke-dasharray="4 2"/>
<text x="1109.3" y="604.0" font-size="10.5" font-family="Liberation Sans" fill="#000" text-anchor="middle">D/FLY</text>
<text x="1109.3" y="613.9" font-size="10.5" font-family="Liberation Sans" fill="#000" text-anchor="middle">SHELL</text>
<text x="1109.3" y="623.8" font-size="10.5" font-family="Liberation Sans" fill="#000" text-anchor="middle">36</text>
<path d="M1083.5 615.5L1133.5 615.5" stroke="#000" stroke-width="1" fill="none"/>
<path d="M1125.5 612.5L1133.5 615.5" stroke="#000" stroke-width="1" fill="none"/>
<circle cx="1053.5" cy="593.5" r="2.6" fill="#000"/>
<circle cx="1176.5" cy="593.5" r="2.6" fill="#000"/>
<circle cx="1176.5" cy="658.5" r="2.6" fill="#000"/>
<circle cx="1053.5" cy="658.5" r="2.6" fill="#000"/>
<circle cx="1060.5" cy="600.5" r="2.6" fill="#000"/>
<circle cx="1169.5" cy="600.5" r="2.6" fill="#000"/>
<circle cx="1169.5" cy="651.5" r="2.6" fill="#000"/>
<circle cx="1061.5" cy="652.5" r="2.6" fill="#000"/>
<circle cx="1093.5" cy="625.5" r="2.6" fill="#000"/>
<circle cx="1169.5" cy="625.5" r="2.6" fill="#000"/>
<circle cx="1062.5" cy="626.5" r="2.6" fill="#000"/>
<rect x="1063.6" y="617.4" width="2.8" height="2.8" fill="#000"/>
<rect x="1063.9" y="630.2" width="2.8" height="2.8" fill="#000"/>
<rect x="1053.6" y="610.6" width="2.8" height="2.8" fill="#000"/>
<rect x="1054.6" y="631.6" width="2.8" height="2.8" fill="#000"/>
<rect x="1056.6" y="620.6" width="2.8" height="2.8" fill="#000"/>
<rect x="1057.6" y="626.1" width="2.8" height="2.8" fill="#000"/>
<circle cx="1176.5" cy="625.5" r="2.2" fill="#fff" stroke="#000" stroke-width="1.2"/>
<path d="M1145.5 666.5L1212.5 665.5L1212.5 709.5L1213.5 716.5L1139.5 718.5L1140.5 683.5L1145.5 666.5Z" fill="none" stroke="#000" stroke-width="1.1" stroke-dasharray="3 2"/>
<path d="M1146.5 672.5L1198.5 672.5L1198.5 709.5L1142.5 711.5L1142.5 683.5L1146.5 672.5Z" fill="#fff" stroke="#2a2a2a" stroke-width="1.3" stroke-linejoin="round"/>
<text x="1172.5" y="681.0" font-size="10.5" font-family="Liberation Sans" fill="#000" text-anchor="middle">Piece 5</text>
<text x="1172.5" y="690.9" font-size="10.5" font-family="Liberation Sans" fill="#000" text-anchor="middle">SHELL</text>
<text x="1172.5" y="700.8" font-size="10.5" font-family="Liberation Sans" fill="#000" text-anchor="middle">36</text>
<path d="M1154.5 691.5L1187.5 691.5" stroke="#000" stroke-width="1" fill="none"/>
<circle cx="1145.5" cy="666.5" r="2.6" fill="#000"/>
<circle cx="1198.5" cy="665.5" r="2.6" fill="#000"/>
<circle cx="1212.5" cy="665.5" r="2.6" fill="#000"/>
<circle cx="1212.5" cy="709.5" r="2.6" fill="#000"/>
<circle cx="1139.5" cy="718.5" r="2.6" fill="#000"/>
<circle cx="1146.5" cy="672.5" r="2.6" fill="#000"/>
<circle cx="1198.5" cy="672.5" r="2.6" fill="#000"/>
<circle cx="1198.5" cy="709.5" r="2.6" fill="#000"/>
<circle cx="1142.5" cy="711.5" r="2.6" fill="#000"/>
<rect x="1141.2" y="682.0" width="2.8" height="2.8" fill="#000"/>
<rect x="1141.1" y="688.6" width="2.8" height="2.8" fill="#000"/>
<rect x="1141.0" y="695.6" width="2.8" height="2.8" fill="#000"/>
<rect x="1141.0" y="702.6" width="2.8" height="2.8" fill="#000"/>
<rect x="1138.9" y="682.0" width="2.8" height="2.8" fill="#000"/>
<rect x="1138.6" y="693.6" width="2.8" height="2.8" fill="#000"/>
<rect x="1138.6" y="703.6" width="2.8" height="2.8" fill="#000"/>
<path d="M1119.5 712.5L1117.5 795.5L1094.5 801.5L1075.5 805.5L1062.5 807.5L1039.5 809.5L1040.5 756.5C1040.5 756.5 1046.2 741.3 1048.5 736.5C1050.8 731.7 1052.2 730.0 1054.5 727.5C1056.8 725.0 1059.5 723.2 1062.5 721.5C1065.5 719.8 1069.2 718.7 1072.5 717.5C1075.8 716.3 1079.2 715.2 1082.5 714.5C1085.8 713.8 1092.5 713.5 1092.5 713.5L1119.5 712.5Z" fill="none" stroke="#000" stroke-width="1.1" stroke-dasharray="3 2"/>
<path d="M1111.5 714.5L1111.5 790.5L1092.5 795.5L1074.5 799.5L1062.5 800.5L1042.5 802.5L1047.5 747.5C1047.5 747.5 1049.0 741.7 1050.5 738.5C1052.0 735.3 1054.2 731.0 1056.5 728.5C1058.8 726.0 1061.7 725.2 1064.5 723.5C1067.3 721.8 1070.3 719.7 1073.5 718.5C1076.7 717.3 1080.2 717.0 1083.5 716.5C1086.8 716.0 1093.5 715.5 1093.5 715.5L1111.5 714.5Z" fill="#fff" stroke="#2a2a2a" stroke-width="1.3" stroke-linejoin="round"/>
<path d="M1047.5 747.5H1099.5V784.5H1042.5" fill="none" stroke="#3a6ff0" stroke-width="1.2"/>
<path d="M1062.6 800.4C1061.5 790 1061 776 1063.6 758C1066 748 1069 742 1074.3 737.7C1079 733 1084 731 1087.6 729.5C1095 727 1103 726.4 1111.6 726.4" fill="none" stroke="#3a6ff0" stroke-width="1.1"/>
<path d="M1074.3 799.4C1073.5 790 1073 780 1073.3 776.4C1074 768 1075 762 1075.9 758C1077 753 1079 751 1082 748.9C1088 743 1094 740 1100.3 739.2L1111 738.2" fill="none" stroke="#3a6ff0" stroke-width="1.1"/>
<text x="1081.2" y="748.0" font-size="10.5" font-family="Liberation Sans" fill="#000" text-anchor="middle">F/PKT SEAM 1X2</text>
<text x="1081.2" y="757.9" font-size="10.5" font-family="Liberation Sans" fill="#000" text-anchor="middle">SHELL</text>
<text x="1081.2" y="767.8" font-size="10.5" font-family="Liberation Sans" fill="#000" text-anchor="middle">36</text>
<path d="M1058.5 758.5L1098.5 758.5" stroke="#000" stroke-width="1" fill="none"/>
<circle cx="1119.5" cy="712.5" r="2.6" fill="#000"/>
<circle cx="1117.5" cy="795.5" r="2.6" fill="#000"/>
<circle cx="1039.5" cy="809.5" r="2.6" fill="#000"/>
<circle cx="1111.5" cy="714.5" r="2.6" fill="#000"/>
<circle cx="1111.5" cy="790.5" r="2.6" fill="#000"/>
<circle cx="1042.5" cy="802.5" r="2.6" fill="#000"/>
<circle cx="1111.5" cy="726.5" r="2.6" fill="#000"/>
<circle cx="1111.5" cy="738.5" r="2.6" fill="#000"/>
<circle cx="1062.5" cy="800.5" r="2.6" fill="#000"/>
<circle cx="1074.5" cy="799.5" r="2.6" fill="#000"/>
<circle cx="1062.5" cy="807.5" r="2.6" fill="#000"/>
<circle cx="1075.5" cy="805.5" r="2.6" fill="#000"/>
<circle cx="1047.5" cy="747.5" r="2.6" fill="#000"/>
<circle cx="1117.5" cy="727.5" r="2.6" fill="#000"/>
<circle cx="1117.5" cy="738.5" r="2.6" fill="#000"/>
<circle cx="1043.5" cy="757.5" r="2.6" fill="#000"/>
<circle cx="1042.5" cy="790.5" r="2.6" fill="#000"/>
<circle cx="1099.5" cy="747.5" r="2.8" fill="#3a6ff0"/>
<circle cx="1099.5" cy="784.5" r="2.8" fill="#3a6ff0"/>
<rect x="1042.0" y="760.5" width="3" height="3" fill="#000"/>
<rect x="1041.5" y="766.5" width="3" height="3" fill="#000"/>
<rect x="1041.5" y="771.5" width="3" height="3" fill="#000"/>
<rect x="1041.3" y="777.5" width="3" height="3" fill="#000"/>
<rect x="1041.3" y="783.1" width="3" height="3" fill="#000"/>
<rect x="1041.2" y="793.5" width="3" height="3" fill="#000"/>
<rect x="1038.5" y="760.5" width="3" height="3" fill="#000"/>
<rect x="1038.5" y="766.5" width="3" height="3" fill="#000"/>
<rect x="1038.5" y="777.5" width="3" height="3" fill="#000"/>
<rect x="1038.5" y="783.5" width="3" height="3" fill="#000"/>
<rect x="1038.0" y="793.5" width="3" height="3" fill="#000"/>
<rect x="1038.5" y="800.5" width="3" height="3" fill="#000"/>
<rect x="1109.5" y="756.1" width="3" height="3" fill="#000"/>
<rect x="1091.2" y="793.8" width="3" height="3" fill="#000"/>
<rect x="1081.5" y="796.0" width="3" height="3" fill="#000"/>
<rect x="1051.5" y="800.0" width="3" height="3" fill="#000"/>
<rect x="1084.5" y="802.0" width="3" height="3" fill="#000"/>
<rect x="1048.5" y="806.5" width="3" height="3" fill="#000"/>
<rect x="1116.5" y="756.1" width="3" height="3" fill="#000"/>
<rect x="1046.8" y="735.1" width="3" height="3" fill="#000"/>
<rect x="1053.1" y="726.1" width="2.6" height="2.6" fill="#fff" stroke="#000" stroke-width="0.8"/>
<rect x="1061.3" y="720.0" width="2.6" height="2.6" fill="#fff" stroke="#000" stroke-width="0.8"/>
<rect x="1071.5" y="715.9" width="2.6" height="2.6" fill="#fff" stroke="#000" stroke-width="0.8"/>
<rect x="1080.7" y="713.4" width="2.6" height="2.6" fill="#fff" stroke="#000" stroke-width="0.8"/>
<rect x="1090.9" y="712.4" width="2.6" height="2.6" fill="#fff" stroke="#000" stroke-width="0.8"/>
<rect x="1055.2" y="727.2" width="2.6" height="2.6" fill="#fff" stroke="#000" stroke-width="0.8"/>
<rect x="1063.3" y="722.1" width="2.6" height="2.6" fill="#fff" stroke="#000" stroke-width="0.8"/>
<rect x="1072.5" y="717.5" width="2.6" height="2.6" fill="#fff" stroke="#000" stroke-width="0.8"/>
<rect x="1081.7" y="714.9" width="2.6" height="2.6" fill="#fff" stroke="#000" stroke-width="0.8"/>
<rect x="1091.9" y="713.9" width="2.6" height="2.6" fill="#fff" stroke="#000" stroke-width="0.8"/>
<rect x="1092.9" y="800.1" width="2.6" height="2.6" fill="#fff" stroke="#000" stroke-width="0.8"/>
<rect x="1068.7" y="805.0" width="2.6" height="2.6" fill="#fff" stroke="#000" stroke-width="0.8"/>
<rect x="1038.7" y="771.7" width="2.6" height="2.6" fill="#fff" stroke="#000" stroke-width="0.8"/>
<path d="M1194.5 733.5L1194.5 754.5L1177.5 755.5C1177.5 755.5 1170.2 757.3 1167.5 758.5C1164.8 759.7 1163.0 760.2 1161.5 762.5C1160.0 764.8 1158.5 772.5 1158.5 772.5L1157.5 814.5L1136.5 817.5L1134.5 773.5C1134.5 773.5 1137.7 757.0 1139.5 752.5C1141.3 748.0 1143.2 748.5 1145.5 746.5C1147.8 744.5 1150.7 742.2 1153.5 740.5C1156.3 738.8 1159.0 737.5 1162.5 736.5C1166.0 735.5 1174.5 734.5 1174.5 734.5L1194.5 733.5Z" fill="none" stroke="#000" stroke-width="1.1" stroke-dasharray="3 2"/>
<path d="M1187.5 736.5L1186.5 748.5L1176.5 748.5C1176.5 748.5 1168.8 750.5 1165.5 752.5C1162.2 754.5 1158.7 758.0 1156.5 760.5C1154.3 763.0 1153.7 764.5 1152.5 767.5C1151.3 770.5 1149.5 778.5 1149.5 778.5L1150.5 807.5L1138.5 809.5L1136.5 774.5C1136.5 774.5 1136.8 769.7 1137.5 766.5C1138.2 763.3 1139.2 758.7 1140.5 755.5C1141.8 752.3 1143.2 750.0 1145.5 747.5C1147.8 745.0 1151.5 742.0 1154.5 740.5C1157.5 739.0 1160.2 739.3 1163.5 738.5C1166.8 737.7 1174.5 735.5 1174.5 735.5L1187.5 736.5Z" fill="#fff" stroke="#2a2a2a" stroke-width="1.3" stroke-linejoin="round"/>
<text x="1146.6" y="762.5" font-size="10.5" font-family="Liberation Sans" fill="#000" text-anchor="middle">F/FAC 1X2</text>
<text x="1146.6" y="772.4" font-size="10.5" font-family="Liberation Sans" fill="#000" text-anchor="middle">SHELL</text>
<text x="1146.6" y="782.3" font-size="10.5" font-family="Liberation Sans" fill="#000" text-anchor="middle">36</text>
<circle cx="1194.5" cy="733.5" r="2.6" fill="#000"/>
<circle cx="1194.5" cy="754.5" r="2.6" fill="#000"/>
<circle cx="1157.5" cy="814.5" r="2.6" fill="#000"/>
<circle cx="1136.5" cy="817.5" r="2.6" fill="#000"/>
<circle cx="1187.5" cy="736.5" r="2.6" fill="#000"/>
<circle cx="1186.5" cy="748.5" r="2.6" fill="#000"/>
<circle cx="1150.5" cy="807.5" r="2.6" fill="#000"/>
<circle cx="1138.5" cy="809.5" r="2.6" fill="#000"/>
<circle cx="1174.5" cy="735.5" r="2.6" fill="#000"/>
<circle cx="1176.5" cy="748.5" r="2.6" fill="#000"/>
<rect x="1163.5" y="751.3" width="3" height="3" fill="#000"/>
<rect x="1155.2" y="758.7" width="3" height="3" fill="#000"/>
<rect x="1148.5" y="784.5" width="3" height="3" fill="#000"/>
<rect x="1148.5" y="790.5" width="3" height="3" fill="#000"/>
<rect x="1136.5" y="791.5" width="3" height="3" fill="#000"/>
<rect x="1136.5" y="800.5" width="3" height="3" fill="#000"/>
<rect x="1135.5" y="772.5" width="3" height="3" fill="#000"/>
<rect x="1137.5" y="756.5" width="3" height="3" fill="#000"/>
<rect x="1142.5" y="746.5" width="3" height="3" fill="#000"/>
<rect x="1148.5" y="742.5" width="3" height="3" fill="#000"/>
<rect x="1133.3" y="792.5" width="3" height="3" fill="#000"/>
<rect x="1139.5" y="808.5" width="3" height="3" fill="#000"/>
<rect x="1165.9" y="757.3" width="3" height="3" fill="#000"/>
<rect x="1174.5" y="753.0" width="3" height="3" fill="#000"/>
<rect x="1184.9" y="740.5" width="3" height="3" fill="#000"/>
<rect x="1161.9" y="736.7" width="2.6" height="2.6" fill="#fff" stroke="#000" stroke-width="0.8"/>
<rect x="1153.6" y="739.5" width="2.6" height="2.6" fill="#fff" stroke="#000" stroke-width="0.8"/>
<rect x="1144.3" y="746.4" width="2.6" height="2.6" fill="#fff" stroke="#000" stroke-width="0.8"/>
<rect x="1138.7" y="754.3" width="2.6" height="2.6" fill="#fff" stroke="#000" stroke-width="0.8"/>
<rect x="1161.0" y="735.3" width="2.6" height="2.6" fill="#fff" stroke="#000" stroke-width="0.8"/>
<rect x="1152.6" y="739.0" width="2.6" height="2.6" fill="#fff" stroke="#000" stroke-width="0.8"/>
<rect x="1144.3" y="745.0" width="2.6" height="2.6" fill="#fff" stroke="#000" stroke-width="0.8"/>
<rect x="1137.8" y="751.5" width="2.6" height="2.6" fill="#fff" stroke="#000" stroke-width="0.8"/>
<rect x="1160.5" y="761.2" width="2.6" height="2.6" fill="#fff" stroke="#000" stroke-width="0.8"/>
<rect x="1157.3" y="771.0" width="2.6" height="2.6" fill="#fff" stroke="#000" stroke-width="0.8"/>
<rect x="1156.2" y="785.7" width="2.6" height="2.6" fill="#fff" stroke="#000" stroke-width="0.8"/>
<rect x="1156.2" y="791.7" width="2.6" height="2.6" fill="#fff" stroke="#000" stroke-width="0.8"/>
<rect x="1133.5" y="778.7" width="2.6" height="2.6" fill="#fff" stroke="#000" stroke-width="0.8"/>
<rect x="1133.7" y="786.7" width="2.6" height="2.6" fill="#fff" stroke="#000" stroke-width="0.8"/>
<rect x="1135.7" y="798.7" width="2.6" height="2.6" fill="#fff" stroke="#000" stroke-width="0.8"/>
<rect x="1142.2" y="815.2" width="2.6" height="2.6" fill="#fff" stroke="#000" stroke-width="0.8"/>
<rect x="1192.9" y="741.2" width="2.6" height="2.6" fill="#fff" stroke="#000" stroke-width="0.8"/>
<path d="M1287.5 452.5L1524.5 439.5C1524.5 439.5 1542.0 437.2 1552.5 434.5C1563.0 431.8 1572.3 430.2 1587.5 423.5C1602.7 416.8 1627.8 403.2 1643.5 394.5C1659.2 385.8 1681.5 371.5 1681.5 371.5C1681.5 371.5 1683.3 385.7 1686.5 391.5C1689.7 397.3 1694.3 401.8 1700.5 406.5C1706.7 411.2 1715.0 415.7 1723.5 419.5C1732.0 423.3 1751.5 429.5 1751.5 429.5L1808.5 447.5L1836.5 456.5L1830.5 490.5L1826.5 530.5L1823.5 570.5L1809.5 572.5C1809.5 572.5 1795.7 574.0 1783.5 574.5C1771.3 575.0 1736.5 575.5 1736.5 575.5L1697.5 575.5L1645.5 572.5L1584.5 569.5L1524.5 566.5L1287.5 556.5L1287.5 452.5Z" fill="#fff" stroke="#1e1e50" stroke-width="1.3" stroke-linejoin="round"/>
<path d="M1524.5 439.5L1524.5 566.5" stroke="#3a6ff0" stroke-width="1" fill="none"/>
<path d="M1681.5 371.5L1697.5 575.5" stroke="#3a6ff0" stroke-width="1" fill="none"/>
<path d="M1751.5 429.5L1736.5 575.5" stroke="#3a6ff0" stroke-width="1" fill="none"/>
<path d="M1808.5 447.5L1809.5 572.5" stroke="#3a6ff0" stroke-width="1" fill="none"/>
<path d="M1396.5 473.5L1724.5 473.5" stroke="#1e1e50" stroke-width="1" fill="none"/>
<path d="M1709.5 467.5L1724.5 473.5" stroke="#1e1e50" stroke-width="1" fill="none"/>
<text transform="translate(1562.9 465.9) scale(1.022 1.05)" font-size="34" font-family="Liberation Sans" fill="#000" text-anchor="middle">BACK</text>
<text transform="translate(1556.8 498.75) scale(0.98 1.05)" font-size="34" font-family="Liberation Sans" fill="#000" text-anchor="middle">36</text>
<circle cx="1287.5" cy="452.5" r="2.6" fill="#1a1a5a"/>
<circle cx="1524.5" cy="439.5" r="2.6" fill="#1a1a5a"/>
<circle cx="1681.5" cy="371.5" r="2.6" fill="#1a1a5a"/>
<circle cx="1751.5" cy="429.5" r="2.6" fill="#1a1a5a"/>
<circle cx="1808.5" cy="447.5" r="2.6" fill="#1a1a5a"/>
<circle cx="1836.5" cy="456.5" r="2.6" fill="#1a1a5a"/>
<circle cx="1823.5" cy="570.5" r="2.6" fill="#1a1a5a"/>
<circle cx="1809.5" cy="572.5" r="2.6" fill="#1a1a5a"/>
<circle cx="1736.5" cy="575.5" r="2.6" fill="#1a1a5a"/>
<circle cx="1697.5" cy="575.5" r="2.6" fill="#1a1a5a"/>
<circle cx="1524.5" cy="566.5" r="2.6" fill="#1a1a5a"/>
<circle cx="1287.5" cy="556.5" r="2.6" fill="#1a1a5a"/>
<rect x="1551.5" y="433.4" width="2" height="2" fill="#1a1a5a"/>
<rect x="1586.4" y="422.6" width="2" height="2" fill="#1a1a5a"/>
<rect x="1642.3" y="393.2" width="2" height="2" fill="#1a1a5a"/>
<rect x="1685.2" y="390.1" width="2" height="2" fill="#1a1a5a"/>
<rect x="1699.4" y="405.2" width="2" height="2" fill="#1a1a5a"/>
<rect x="1722.6" y="418.0" width="2" height="2" fill="#1a1a5a"/>
<rect x="1829.0" y="489.6" width="2" height="2" fill="#1a1a5a"/>
<rect x="1825.4" y="529.3" width="2" height="2" fill="#1a1a5a"/>
<rect x="1782.1" y="573.2" width="2" height="2" fill="#1a1a5a"/>
<rect x="1644.3" y="571.5" width="2" height="2" fill="#1a1a5a"/>
<rect x="1583.3" y="568.3" width="2" height="2" fill="#1a1a5a"/>
<rect x="1273.5" y="355.5" width="577" height="236" fill="none" stroke="#000" stroke-width="1" stroke-dasharray="3 3"/>
<rect x="1271.0" y="353.0" width="5" height="5" fill="#333"/><path d="M1272.5 355.5H1276.0" stroke="#eee" stroke-width="1"/>
<rect x="1559.0" y="353.0" width="5" height="5" fill="#333"/><path d="M1560.5 355.5H1564.0" stroke="#eee" stroke-width="1"/>
<rect x="1848.0" y="353.0" width="5" height="5" fill="#333"/><path d="M1849.5 355.5H1853.0" stroke="#eee" stroke-width="1"/>
<rect x="1271.0" y="471.0" width="5" height="5" fill="#333"/><path d="M1272.5 473.5H1276.0" stroke="#eee" stroke-width="1"/>
<rect x="1848.0" y="471.0" width="5" height="5" fill="#333"/><path d="M1849.5 473.5H1853.0" stroke="#eee" stroke-width="1"/>
<rect x="1271.0" y="589.0" width="5" height="5" fill="#333"/><path d="M1272.5 591.5H1276.0" stroke="#eee" stroke-width="1"/>
<rect x="1559.0" y="589.0" width="5" height="5" fill="#333"/><path d="M1560.5 591.5H1564.0" stroke="#eee" stroke-width="1"/>
<rect x="1848.0" y="589.0" width="5" height="5" fill="#333"/><path d="M1849.5 591.5H1853.0" stroke="#eee" stroke-width="1"/>
<path d="M1290.5 631.5L1527.5 618.5C1527.5 618.5 1534.7 619.2 1554.5 616.5C1574.3 613.8 1622.2 607.0 1646.5 602.5C1670.8 598.0 1700.5 589.5 1700.5 589.5C1700.5 589.5 1700.0 594.0 1702.5 596.5C1705.0 599.0 1710.3 602.7 1715.5 604.5C1720.7 606.3 1729.2 606.8 1733.5 607.5C1737.8 608.2 1741.5 608.5 1741.5 608.5L1829.5 620.5L1826.5 651.5L1824.5 674.5L1824.5 726.5L1788.5 735.5L1776.5 736.5L1756.5 738.5L1738.5 738.5L1700.5 737.5L1652.5 735.5L1562.5 730.5L1527.5 728.5L1290.5 718.5L1290.5 631.5Z" fill="#fff" stroke="#222" stroke-width="1.3" stroke-linejoin="round"/>
<path d="M1527.5 618.5L1527.5 728.5" stroke="#3a6ff0" stroke-width="1" fill="none"/>
<path d="M1700.5 589.5L1700.5 737.5" stroke="#3a6ff0" stroke-width="1" fill="none"/>
<path d="M1741.5 608.5L1738.5 738.5" stroke="#3a6ff0" stroke-width="1" fill="none"/>
<path d="M1696.5 646.5L1826.5 646.5" stroke="#3a6ff0" stroke-width="1" fill="none"/>
<path d="M1696.4 646.6C1698 670 1703 695 1716.3 711.3C1725 720 1733 726 1738.2 733.8" fill="none" stroke="#3a6ff0" stroke-width="1.1"/>
<path d="M1756 738.5C1757 715 1758 700 1761.3 683.5C1765 672 1773 660 1787 655.4C1800 652 1812 651.5 1826.4 651.3" fill="none" stroke="#3a6ff0" stroke-width="1.1"/>
<path d="M1776.7 736.6C1775 715 1776 700 1779.5 685C1783 677 1790 670 1801.4 665.4C1810 663 1818 662.6 1825.5 662.5" fill="none" stroke="#3a6ff0" stroke-width="1.1"/>
<path d="M1788.3 735.7C1787 715 1788 700 1789.8 692.5C1792 686 1797 681 1814.6 675.3L1824.5 674.7" fill="none" stroke="#3a6ff0" stroke-width="1.1"/>
<path d="M1761.3 683.5H1813.3V720.3L1757.5 721.2" fill="none" stroke="#3a6ff0" stroke-width="1.2"/>
<path d="M1397.5 665.5L1721.5 665.5" stroke="#222" stroke-width="1" fill="none"/>
<path d="M1706.5 659.5L1721.5 665.5" stroke="#222" stroke-width="1" fill="none"/>
<text transform="translate(1561.4 658.8) scale(0.994 1.05)" font-size="34" font-family="Liberation Sans" fill="#000" text-anchor="middle">FRONT</text>
<text transform="translate(1555.1 690.3) scale(0.98 1.05)" font-size="34" font-family="Liberation Sans" fill="#000" text-anchor="middle">36</text>
<circle cx="1290.5" cy="631.5" r="2.6" fill="#000"/>
<circle cx="1290.5" cy="718.5" r="2.6" fill="#000"/>
<circle cx="1527.5" cy="618.5" r="2.6" fill="#000"/>
<circle cx="1527.5" cy="728.5" r="2.6" fill="#000"/>
<circle cx="1700.5" cy="589.5" r="2.6" fill="#000"/>
<circle cx="1741.5" cy="608.5" r="2.6" fill="#000"/>
<circle cx="1829.5" cy="620.5" r="2.6" fill="#000"/>
<circle cx="1824.5" cy="726.5" r="2.6" fill="#000"/>
<circle cx="1788.5" cy="735.5" r="2.6" fill="#000"/>
<circle cx="1756.5" cy="738.5" r="2.6" fill="#000"/>
<circle cx="1738.5" cy="738.5" r="2.6" fill="#000"/>
<circle cx="1700.5" cy="737.5" r="2.6" fill="#000"/>
<circle cx="1826.5" cy="646.5" r="2.6" fill="#000"/>
<circle cx="1826.5" cy="651.5" r="2.6" fill="#000"/>
<circle cx="1825.5" cy="662.5" r="2.6" fill="#000"/>
<circle cx="1824.5" cy="674.5" r="2.6" fill="#000"/>
<circle cx="1696.5" cy="646.5" r="2.4" fill="#3a6ff0"/>
<circle cx="1761.5" cy="683.5" r="2.4" fill="#3a6ff0"/>
<circle cx="1813.5" cy="683.5" r="2.4" fill="#3a6ff0"/>
<circle cx="1813.5" cy="720.5" r="2.4" fill="#3a6ff0"/>
<circle cx="1757.5" cy="721.5" r="2.4" fill="#3a6ff0"/>
<circle cx="1776.5" cy="736.5" r="2.4" fill="#3a6ff0"/>
<rect x="1553.3" y="615.1" width="2.2" height="2.2" fill="#000"/>
<rect x="1645.2" y="601.4" width="2.2" height="2.2" fill="#000"/>
<rect x="1701.1" y="595.4" width="2.2" height="2.2" fill="#000"/>
<rect x="1714.6" y="603.3" width="2.2" height="2.2" fill="#000"/>
<rect x="1723.9" y="604.9" width="2.2" height="2.2" fill="#000"/>
<rect x="1732.4" y="606.1" width="2.2" height="2.2" fill="#000"/>
<rect x="1824.9" y="639.9" width="2.2" height="2.2" fill="#000"/>
<rect x="1823.4" y="698.9" width="2.2" height="2.2" fill="#000"/>
<rect x="1651.2" y="734.2" width="2.2" height="2.2" fill="#000"/>
<rect x="1561.4" y="729.0" width="2.2" height="2.2" fill="#000"/>
<rect x="1715.2" y="710.2" width="2.2" height="2.2" fill="#3a6ff0"/>
<rect x="1733.4" y="725.2" width="2.2" height="2.2" fill="#3a6ff0"/>
<rect x="1769.0" y="664.3" width="2.2" height="2.2" fill="#3a6ff0"/>
<rect x="1785.9" y="654.3" width="2.2" height="2.2" fill="#3a6ff0"/>
<rect x="1787.2" y="672.1" width="2.2" height="2.2" fill="#3a6ff0"/>
<rect x="1800.3" y="664.3" width="2.2" height="2.2" fill="#3a6ff0"/>
<rect x="1794.3" y="683.0" width="2.2" height="2.2" fill="#3a6ff0"/>
<rect x="1813.5" y="674.2" width="2.2" height="2.2" fill="#3a6ff0"/>
<rect x="1757.8" y="692.4" width="2.2" height="2.2" fill="#3a6ff0"/>
<rect x="1785.9" y="711.1" width="2.2" height="2.2" fill="#3a6ff0"/>
</svg>
<div class="a" style="left:2px;top:1022px;width:1916px;height:1px;background:#fafafa"></div>
<div class="a" style="left:2px;top:1023px;width:1916px;height:1px;background:#a8a8a8"></div>
<div class="a" style="left:2px;top:1024px;width:1916px;height:23px;background:#efefef"></div>
<div class="t" style="left:5px;top:1030px;letter-spacing:-0.55px">8 F/PKT SEAM 1X2(2) Code:SHELL</div>
<div class="a" style="left:1503px;top:1024px;width:164px;height:23px;border:1px solid #cfcfcf;border-bottom:none;border-right-color:#bdbdbd"></div>
<div class="a" style="left:1669px;top:1024px;width:55px;height:23px;border:1px solid #cfcfcf;border-bottom:none;border-right-color:#bdbdbd"></div>
<div class="a" style="left:1726px;top:1024px;width:102px;height:23px;border:1px solid #cfcfcf;border-bottom:none;border-right-color:#bdbdbd"></div>
<div class="a" style="left:1830px;top:1024px;width:87px;height:23px;border:1px solid #cfcfcf;border-bottom:none;border-right-color:#bdbdbd"></div>
<div class="t" style="left:1845px;top:1030px">CM - sq.m</div>
<svg class="a" style="left:1365px;top:1022px" width="140" height="26" viewBox="0 0 140 26"><rect x="5" y="2" width="26" height="24" fill="#fff"/><path d="M5 2 V26 H31 Z" fill="#cfcfcf"/><rect x="7.5" y="3.5" width="6" height="6" fill="#333" stroke="#000" stroke-width="1"/><rect x="9.5" y="5.5" width="2" height="2" fill="#fff"/><rect x="24.5" y="19.5" width="6" height="6" fill="#333" stroke="#000" stroke-width="1"/><rect x="26.5" y="21.5" width="2" height="2" fill="#fff"/><path d="M13 9 L25 20" stroke="#000" stroke-width="1.1"/><text x="18" y="12" font-size="7" font-family="Liberation Sans" fill="#000" transform="rotate(45 22 11)">1.0</text><rect x="33" y="2" width="24" height="24" fill="#b9c9f6"/><path d="M36 6.5 H55 V20 H49 V12.5 H41 V17 H38.5 V11 Q36 9 36 6.5 Z" fill="#fff" stroke="#000" stroke-width="1.3"/><rect x="36" y="21" width="20" height="4" rx="1" fill="#5ac0f0" stroke="#000" stroke-width="1"/><rect x="59" y="2" width="24" height="24" fill="#b9c9f6"/><path d="M59 2 L83 26" stroke="#2a60e0" stroke-width="1" stroke-dasharray="2 2"/><rect x="63" y="6" width="3" height="3" fill="#c05010"/><rect x="69" y="13" width="3" height="3" fill="#c05010"/><rect x="76" y="19" width="3" height="3" fill="#c05010"/><rect x="84" y="2" width="25" height="24" fill="#fff"/><path d="M85 2.5 C97 3 106 13 108 26 M85 12.5 C92 13 97 19 98.5 26" fill="none" stroke="#000" stroke-width="1.4"/><path d="M94 20 L100 13 M97 12.5 H101 V16.5" fill="none" stroke="#000" stroke-width="1.1"/><rect x="110" y="2" width="26" height="24" fill="#cfcfcf"/><path d="M111 8 H130 M111 14 H126 M111 20 H121" stroke="#fff" stroke-width="2"/><path d="M111 4.5 H132 M111 10.5 H127 M111 16.5 H121" stroke="#000" stroke-width="1.2"/><rect x="118.5" y="14.5" width="5" height="5" fill="#000" stroke="#fff" stroke-width="1"/><rect x="124.5" y="9.5" width="5" height="5" fill="#000" stroke="#fff" stroke-width="1"/><rect x="129.5" y="3.5" width="5" height="5" fill="#000" stroke="#fff" stroke-width="1"/><path d="M121 20 V26 M127 15 V26 M132 9 V26 M134.5 2 V6" stroke="#000" stroke-width="1.2"/></svg>
<div class="a" style="left:0;top:1047px;width:1919px;height:1px;background:#1a4f80"></div>
<div class="a" style="left:0;top:1048px;width:1919px;height:1px;background:#12a0ee"></div>
<div class="a" style="left:0;top:1049px;width:1919px;height:30px;background:#d3e4ef"></div>
<svg class="a" style="left:0;top:1049px" width="1919" height="30" viewBox="0 0 1919 30"><path d="M10 10.5 L17 9.5 V16 H10Z M18 9.3 L26 8.2 V16 H18Z M10 17 H17 V23.5 L10 22.5Z M18 17 H26 V24.8 L18 23.7Z" fill="#000"/><circle cx="56" cy="13" r="5.5" fill="none" stroke="#000" stroke-width="1.5"/><path d="M52 17 L46.5 22.5" stroke="#000" stroke-width="1.6"/><circle cx="90" cy="15" r="6.5" fill="none" stroke="#000" stroke-width="2"/><path d="M118 9.5 H131 M118 21.5 H131 M119.5 11 V20 M129.5 11 V20 M133 8.5 V11.5 M133 13 V22" fill="none" stroke="#000" stroke-width="1.3"/><g transform="translate(0 1)"><rect x="157" y="10" width="16" height="12" fill="#f4bc5a"/><rect x="157" y="8" width="7" height="3" fill="#d8902e"/><path d="M160 22 V17 H170 V22 H167 V19.5 H163 V22 Z" fill="#3a88e0"/></g><rect x="151" y="28" width="28" height="2" fill="#2a7ad8"/><g transform="translate(0 1)"><rect x="196" y="8" width="13" height="15" fill="#a8d8f0" stroke="#b0a080" stroke-width="0.8"/><path d="M197 7.5 H209" stroke="#333" stroke-width="1" stroke-dasharray="1 1"/><path d="M198 12H207M198 15H207M198 18H207" stroke="#7ab0d8" stroke-width="0.7"/></g><rect x="188" y="28" width="28" height="2" fill="#2a7ad8"/><rect x="221" y="1" width="36" height="27" fill="#e4eef5"/><g transform="translate(0 1)"><circle cx="239" cy="15" r="8" fill="#c8a860"/><circle cx="239" cy="13" r="5" fill="#e8d8a0" opacity="0.6"/><path d="M234.5 9.5 L242 19 M243.5 9.5 L236 19" stroke="#fff" stroke-width="1.6"/><path d="M234.5 9.5 L242 19 M243.5 9.5 L236 19" stroke="#222" stroke-width="0.6"/><circle cx="236" cy="19.5" r="2" fill="none" stroke="#6a1050" stroke-width="1.2"/><circle cx="242" cy="19.5" r="2" fill="none" stroke="#6a1050" stroke-width="1.2"/></g><rect x="221" y="28" width="36" height="2" fill="#2a7ad8"/><path d="M1727 18 L1732 13 L1737 18" fill="none" stroke="#000" stroke-width="1.2"/><rect x="1752" y="11" width="6" height="11" fill="none" stroke="#000" stroke-width="1"/><rect x="1753.5" y="7" width="3" height="4" fill="none" stroke="#000" stroke-width="0.8"/><path d="M1758 19 L1761 22 L1763 18" fill="none" stroke="#000" stroke-width="0.8"/><path d="M1773 13 H1776 L1780 9.5 V21.5 L1776 18 H1773Z" fill="none" stroke="#000" stroke-width="1"/><path d="M1782.5 12.5 Q1784.5 15.5 1782.5 18.5 M1785 10.5 Q1788 15.5 1785 20.5" fill="none" stroke="#000" stroke-width="1"/><path d="M1880 9 H1895 V19 H1886 L1883 22 V19 H1880Z" fill="#000"/><path d="M1883 12H1892M1883 14.5H1892M1883 17H1889" stroke="#fff" stroke-width="0.8"/></svg>
<div class="t" style="left:1799px;top:1059px;font-size:12px;color:#111">ESP</div>
<div class="t" style="left:1836px;top:1059px;font-size:12px;color:#111">8:17</div>
</body></html>
